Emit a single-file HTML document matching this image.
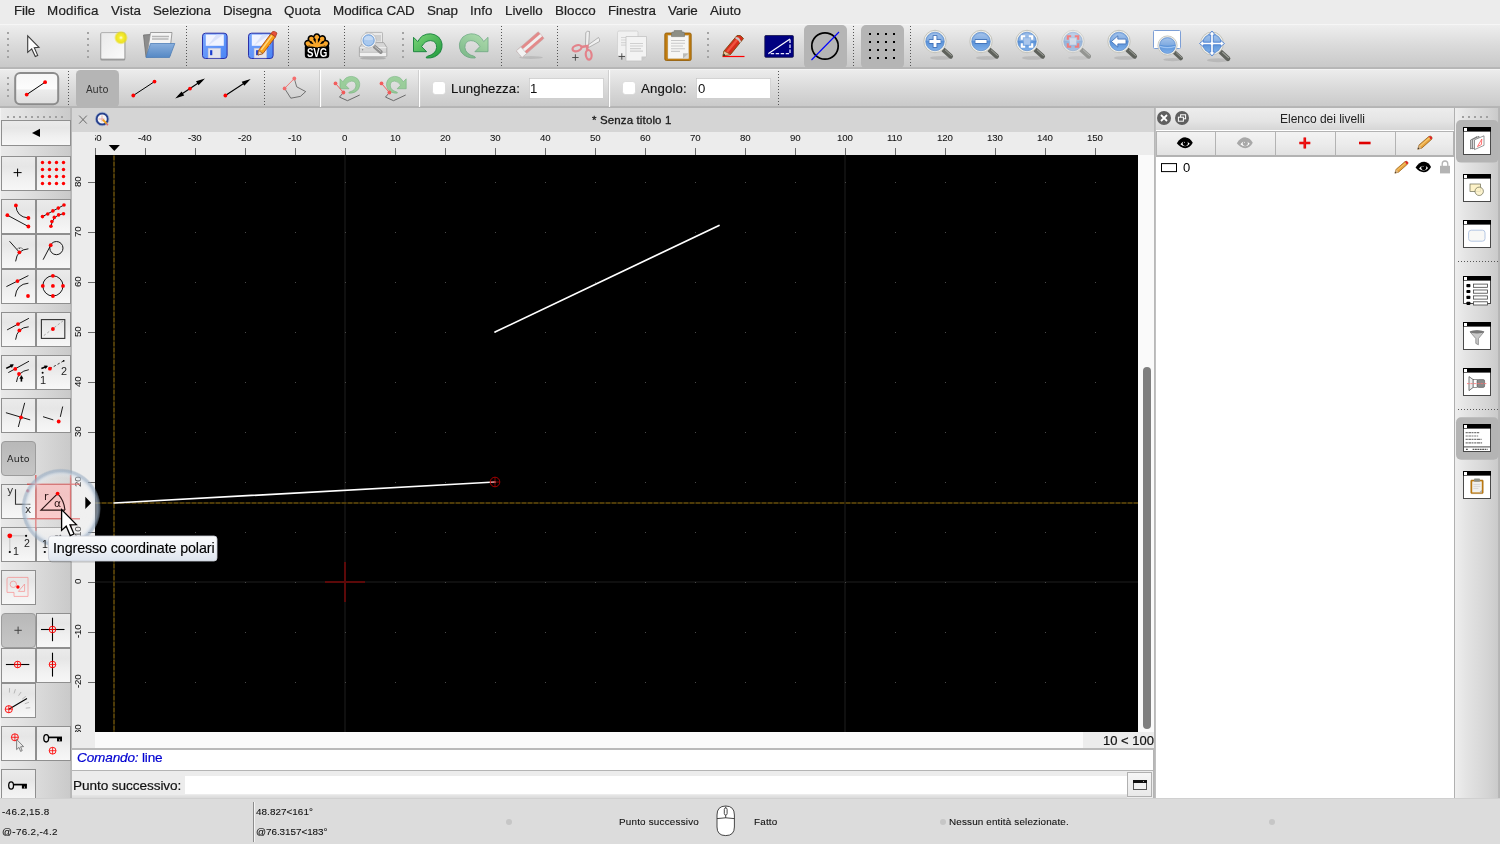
<!DOCTYPE html>
<html lang="it"><head><meta charset="utf-8"><title>Senza titolo 1 - QCAD</title>
<style>
*{box-sizing:border-box;margin:0;padding:0}
html,body{width:1500px;height:844px;overflow:hidden;background:#ececec}
body{font-family:"Liberation Sans",sans-serif;position:relative;-webkit-font-smoothing:antialiased}
.a{position:absolute}
.t{position:absolute;white-space:pre;line-height:1;font-family:"Liberation Sans",sans-serif;will-change:transform}
svg{position:absolute;overflow:visible}
.tb{background:linear-gradient(#f1f1f1,#e4e4e4 45%,#cdcdcd)}
.btn{position:absolute;border:1px solid #9a9a9a;background:linear-gradient(#fbfbfb,#ededed 50%,#dcdcdc)}
</style></head>
<body>
<div class="a" style="left:0px;top:0px;width:1500px;height:24px;background:#ececec"></div>
<span class="t " style="left:13.8px;top:3.6px;font-size:13.4px;color:#222;letter-spacing:-0.123px;-webkit-text-stroke:0.2px #222;">File</span>
<span class="t " style="left:47px;top:3.6px;font-size:13.4px;color:#222;letter-spacing:0.225px;-webkit-text-stroke:0.2px #222;">Modifica</span>
<span class="t " style="left:110.9px;top:3.6px;font-size:13.4px;color:#222;letter-spacing:0.110px;-webkit-text-stroke:0.2px #222;">Vista</span>
<span class="t " style="left:152.9px;top:3.6px;font-size:13.4px;color:#222;letter-spacing:-0.117px;-webkit-text-stroke:0.2px #222;">Seleziona</span>
<span class="t " style="left:222.9px;top:3.6px;font-size:13.4px;color:#222;letter-spacing:-0.081px;-webkit-text-stroke:0.2px #222;">Disegna</span>
<span class="t " style="left:283.9px;top:3.6px;font-size:13.4px;color:#222;letter-spacing:0.039px;-webkit-text-stroke:0.2px #222;">Quota</span>
<span class="t " style="left:332.8px;top:3.6px;font-size:13.4px;color:#222;letter-spacing:-0.009px;-webkit-text-stroke:0.2px #222;">Modifica CAD</span>
<span class="t " style="left:427px;top:3.6px;font-size:13.4px;color:#222;letter-spacing:-0.149px;-webkit-text-stroke:0.2px #222;">Snap</span>
<span class="t " style="left:470.1px;top:3.6px;font-size:13.4px;color:#222;letter-spacing:0.037px;-webkit-text-stroke:0.2px #222;">Info</span>
<span class="t " style="left:505.1px;top:3.6px;font-size:13.4px;color:#222;letter-spacing:-0.041px;-webkit-text-stroke:0.2px #222;">Livello</span>
<span class="t " style="left:555.2px;top:3.6px;font-size:13.4px;color:#222;letter-spacing:0.097px;-webkit-text-stroke:0.2px #222;">Blocco</span>
<span class="t " style="left:607.9px;top:3.6px;font-size:13.4px;color:#222;letter-spacing:-0.063px;-webkit-text-stroke:0.2px #222;">Finestra</span>
<span class="t " style="left:668px;top:3.6px;font-size:13.4px;color:#222;letter-spacing:-0.138px;-webkit-text-stroke:0.2px #222;">Varie</span>
<span class="t " style="left:709.8px;top:3.6px;font-size:13.4px;color:#222;letter-spacing:0.111px;-webkit-text-stroke:0.2px #222;">Aiuto</span>
<div class="a" style="left:0px;top:24px;width:1500px;height:45px;background:linear-gradient(#f6f6f6 0,#f6f6f6 1px,#eeeeee 1px,#dadada 22px,#c9c9c9 43px,#bababa 43px,#b4b4b4 44px,#b8b8b8 45px)"></div>
<div class="a" style="left:0px;top:69px;width:1500px;height:39px;background:linear-gradient(#f4f4f4 0,#f4f4f4 1px,#ececec 1px,#dadada 19px,#cacaca 37px,#bababa 37px,#b2b2b2 38px,#b6b6b6 39px)"></div>
<svg class="a" style="left:0;top:0" width="1500" height="110" viewBox="0 0 1500 110"><defs>
<linearGradient id="gblue" x1="0" y1="0" x2="0" y2="1"><stop offset="0" stop-color="#8db4e6"/><stop offset="0.5" stop-color="#5a92d8"/><stop offset="1" stop-color="#7fb0ea"/></linearGradient>
<linearGradient id="gfold" x1="0" y1="0" x2="0" y2="1"><stop offset="0" stop-color="#8ab0de"/><stop offset="1" stop-color="#5588c4"/></linearGradient>
<linearGradient id="gsave" x1="0" y1="0" x2="1" y2="1"><stop offset="0" stop-color="#7aa8ff"/><stop offset="1" stop-color="#4a84f4"/></linearGradient>
<linearGradient id="gpaper" x1="0" y1="0" x2="1" y2="1"><stop offset="0" stop-color="#e9e9e9"/><stop offset="1" stop-color="#fbfbfb"/></linearGradient>
<radialGradient id="gglow"><stop offset="0" stop-color="#ffffe8"/><stop offset="0.3" stop-color="#f6ee30"/><stop offset="0.7" stop-color="#ece010" stop-opacity="0.9"/><stop offset="1" stop-color="#e8dc10" stop-opacity="0"/></radialGradient>
<linearGradient id="ggreen" x1="0" y1="0" x2="1" y2="1"><stop offset="0" stop-color="#7ed67a"/><stop offset="1" stop-color="#1f9a3c"/></linearGradient>
<g id="mag"><ellipse cx="6" cy="16.4" rx="11" ry="1.9" fill="#000" opacity="0.10"/><path d="M8.6 8.4 L15.6 14.8" stroke="#5f625c" stroke-width="4.8" stroke-linecap="round"/><path d="M10.4 8.6 L16.4 14" stroke="#a3a69f" stroke-width="1" stroke-linecap="round"/><circle cx="0" cy="0" r="11.2" fill="#f1f1ec" stroke="#bdbdb5" stroke-width="0.9"/><circle cx="0" cy="0" r="9.3" fill="url(#gblue)" stroke="#4d7fc4" stroke-width="0.6"/><path d="M-8.8 -1 A9 9 0 0 1 8.8 -1 Q0 1.6 -8.8 -1 Z" fill="#fff" opacity="0.22"/></g>
</defs><rect x="7" y="32" width="2" height="2" fill="#a3a3a3"/><rect x="7" y="38" width="2" height="2" fill="#a3a3a3"/><rect x="7" y="44" width="2" height="2" fill="#a3a3a3"/><rect x="7" y="50" width="2" height="2" fill="#a3a3a3"/><rect x="7" y="56" width="2" height="2" fill="#a3a3a3"/><rect x="87" y="32" width="2" height="2" fill="#a3a3a3"/><rect x="87" y="38" width="2" height="2" fill="#a3a3a3"/><rect x="87" y="44" width="2" height="2" fill="#a3a3a3"/><rect x="87" y="50" width="2" height="2" fill="#a3a3a3"/><rect x="87" y="56" width="2" height="2" fill="#a3a3a3"/><rect x="402" y="32" width="2" height="2" fill="#a3a3a3"/><rect x="402" y="38" width="2" height="2" fill="#a3a3a3"/><rect x="402" y="44" width="2" height="2" fill="#a3a3a3"/><rect x="402" y="50" width="2" height="2" fill="#a3a3a3"/><rect x="402" y="56" width="2" height="2" fill="#a3a3a3"/><rect x="707" y="32" width="2" height="2" fill="#a3a3a3"/><rect x="707" y="38" width="2" height="2" fill="#a3a3a3"/><rect x="707" y="44" width="2" height="2" fill="#a3a3a3"/><rect x="707" y="50" width="2" height="2" fill="#a3a3a3"/><rect x="707" y="56" width="2" height="2" fill="#a3a3a3"/><line x1="186.5" y1="26" x2="186.5" y2="67" stroke="#555" stroke-width="1" stroke-dasharray="1 2"/><line x1="288.5" y1="26" x2="288.5" y2="67" stroke="#555" stroke-width="1" stroke-dasharray="1 2"/><line x1="344.5" y1="26" x2="344.5" y2="67" stroke="#555" stroke-width="1" stroke-dasharray="1 2"/><line x1="501.5" y1="26" x2="501.5" y2="67" stroke="#555" stroke-width="1" stroke-dasharray="1 2"/><line x1="557.5" y1="26" x2="557.5" y2="67" stroke="#555" stroke-width="1" stroke-dasharray="1 2"/><line x1="853.5" y1="26" x2="853.5" y2="67" stroke="#555" stroke-width="1" stroke-dasharray="1 2"/><line x1="910.5" y1="26" x2="910.5" y2="67" stroke="#555" stroke-width="1" stroke-dasharray="1 2"/><path d="M27.7 35.8 L27.7 52.4 L31.7 48.9 L35.3 56.6 L37.7 55.4 L34.3 47.8 L39 47.3 Z" fill="#fdfdfd" stroke="#3c3c3c" stroke-width="1.1" stroke-linejoin="miter"/><rect x="100.3" y="33" width="25" height="27.6" rx="1.5" fill="#7f7f7f" opacity="0.7"/><rect x="100.8" y="32.6" width="24" height="26.4" rx="1.2" fill="url(#gpaper)" stroke="#a0a0a0" stroke-width="0.8"/><circle cx="121" cy="37.7" r="7" fill="url(#gglow)"/><path d="M143.5 35 L150 34.5 L151 36 L170 36 L170 56 L146 57 Z" fill="#8c8c8c" stroke="#6e6e6e" stroke-width="0.8"/><path d="M150.5 32.5 L172 32.5 L170 50 L147 55 Z" fill="#f4f4f4" stroke="#8a8a8a" stroke-width="0.8"/><path d="M152 36.5 h17 M152 39 h16.5" stroke="#b5b5b5" stroke-width="1.6"/><path d="M150.5 43.5 L174.8 43.5 L169.5 57.5 L146 57.5 Z" fill="url(#gfold)" stroke="#4f7fb8" stroke-width="0.8" stroke-linejoin="round"/><rect x="202.5" y="33.2" width="24.6" height="25.3" rx="3" fill="url(#gsave)" stroke="#2a30a8" stroke-width="1"/><rect x="205.8" y="34.6" width="18" height="11.2" fill="#f0f3ff"/><path d="M207.5 46 L216.5 34.6 L223.5 34.6 Z" fill="#d5ddfa" opacity="0.8"/><rect x="208.1" y="48.2" width="12.5" height="9.8" fill="#e4e4ec" stroke="#b9bdd8" stroke-width="0.5"/><rect x="210.1" y="50.2" width="2.2" height="5" fill="#1c3fd0"/><rect x="248.5" y="33.2" width="24.6" height="25.3" rx="3" fill="url(#gsave)" stroke="#2a30a8" stroke-width="1"/><rect x="251.8" y="34.6" width="18" height="11.2" fill="#f0f3ff"/><path d="M253.5 46 L262.5 34.6 L269.5 34.6 Z" fill="#d5ddfa" opacity="0.8"/><rect x="254.1" y="48.2" width="12.5" height="9.8" fill="#e4e4ec" stroke="#b9bdd8" stroke-width="0.5"/><rect x="256.1" y="50.2" width="2.2" height="5" fill="#1c3fd0"/><path d="M258.5 50.5 L271 33.5 L275.5 36.8 L263 53.5 L258 55 Z" fill="#f7a21a" stroke="#b04a10" stroke-width="0.9" stroke-linejoin="round"/><path d="M271 33.5 L272.6 31.6 Q274.8 30.8 277 33 L275.5 36.8 Z" fill="#e8503a" stroke="#a83a20" stroke-width="0.8"/><path d="M261.2 50 L272 35.6" stroke="#ffd98a" stroke-width="1.3"/><path d="M258.5 50.5 L263 53.5 L258 55 Z" fill="#f1d6a8" stroke="#8a4a20" stroke-width="0.6"/><g fill="#000" stroke="#000" stroke-width="3" stroke-linejoin="round"><g transform="translate(316.8 46.5) rotate(-72)"><path d="M-1.2 0 L-1.2 -7.4 A2.3 2.3 0 1 1 1.2 -7.4 L1.2 0 Z"/></g><g transform="translate(316.8 46.5) rotate(-36)"><path d="M-1.2 0 L-1.2 -7.4 A2.3 2.3 0 1 1 1.2 -7.4 L1.2 0 Z"/></g><g transform="translate(316.8 46.5) rotate(0)"><path d="M-1.2 0 L-1.2 -7.4 A2.3 2.3 0 1 1 1.2 -7.4 L1.2 0 Z"/></g><g transform="translate(316.8 46.5) rotate(36)"><path d="M-1.2 0 L-1.2 -7.4 A2.3 2.3 0 1 1 1.2 -7.4 L1.2 0 Z"/></g><g transform="translate(316.8 46.5) rotate(72)"><path d="M-1.2 0 L-1.2 -7.4 A2.3 2.3 0 1 1 1.2 -7.4 L1.2 0 Z"/></g></g><rect x="304.8" y="44" width="24.4" height="14.2" rx="3.2" fill="#000"/><g fill="#f9a72b"><g transform="translate(316.8 46.5) rotate(-72)"><path d="M-1.1 0 L-1.1 -7.4 A2.2 2.2 0 1 1 1.1 -7.4 L1.1 0 Z"/></g><g transform="translate(316.8 46.5) rotate(-36)"><path d="M-1.1 0 L-1.1 -7.4 A2.2 2.2 0 1 1 1.1 -7.4 L1.1 0 Z"/></g><g transform="translate(316.8 46.5) rotate(0)"><path d="M-1.1 0 L-1.1 -7.4 A2.2 2.2 0 1 1 1.1 -7.4 L1.1 0 Z"/></g><g transform="translate(316.8 46.5) rotate(36)"><path d="M-1.1 0 L-1.1 -7.4 A2.2 2.2 0 1 1 1.1 -7.4 L1.1 0 Z"/></g><g transform="translate(316.8 46.5) rotate(72)"><path d="M-1.1 0 L-1.1 -7.4 A2.2 2.2 0 1 1 1.1 -7.4 L1.1 0 Z"/></g><path d="M307 46.4 Q316.8 41 326.6 46.4 Z"/></g><text x="317.1" y="56.6" font-family="Liberation Sans, sans-serif" font-weight="bold" font-size="12" fill="#fff" text-anchor="middle" textLength="20.4" lengthAdjust="spacingAndGlyphs">SVG</text><ellipse cx="373" cy="58.2" rx="13" ry="1.6" fill="#000" opacity="0.16"/><rect x="365.5" y="32.4" width="17" height="12.5" rx="0.8" fill="#e9e9e9" stroke="#ababab" stroke-width="0.8"/><rect x="373.5" y="35" width="7.5" height="6.5" fill="#cfcfcf"/><path d="M359.4 47.4 L362.8 42.6 L383.8 42.6 L386.8 47.4 L386.8 56.4 L359.4 56.4 Z" fill="#d6d6d6" stroke="#9c9c9c" stroke-width="0.8" stroke-linejoin="round"/><path d="M360 47.6 H386.4" stroke="#f4f4f4" stroke-width="0.8"/><circle cx="362.6" cy="49.8" r="0.7" fill="#8a8a8a"/><rect x="359.6" y="52.2" width="27" height="4.4" fill="#f0f0f0" stroke="#aaaaaa" stroke-width="0.6"/><path d="M374.4 46.6 L380.8 52" stroke="#8e8e8e" stroke-width="3.8" stroke-linecap="round"/><path d="M375 46.6 L380.6 51.2" stroke="#c8c8c8" stroke-width="1" stroke-linecap="round"/><circle cx="368.6" cy="40.4" r="7.6" fill="#f2f2f2" stroke="#b4b4b4" stroke-width="0.7"/><circle cx="368.6" cy="40.4" r="5.6" fill="#a9c9ef" stroke="#5f93d4" stroke-width="0.9"/><path d="M363.6 39.4 A5.2 5.2 0 0 1 373.6 39.4 Q368.6 41 363.6 39.4 Z" fill="#fff" opacity="0.3"/><path d="M413.5 37.3 L413.5 51.7 L426.6 51.7 L421.6 46.6 Q425 40.6 430.6 40.6 Q436.8 41 436.6 47.6 Q436 54 427.4 56.3 Q425.6 57 426.4 58 Q435.6 58.6 440.4 52 Q444.6 43.6 438.6 37 Q431 31.2 422.6 35.8 Q419.6 38 417.8 41.6 Z" fill="url(#ggreen)" stroke="#15803a" stroke-width="0.9" stroke-linejoin="round"/><g opacity="0.5"><path transform="translate(901.5 0) scale(-1 1)" d="M413.5 37.3 L413.5 51.7 L426.6 51.7 L421.6 46.6 Q425 40.6 430.6 40.6 Q436.8 41 436.6 47.6 Q436 54 427.4 56.3 Q425.6 57 426.4 58 Q435.6 58.6 440.4 52 Q444.6 43.6 438.6 37 Q431 31.2 422.6 35.8 Q419.6 38 417.8 41.6 Z" fill="url(#ggreen)" stroke="#15803a" stroke-width="0.9" stroke-linejoin="round"/></g><ellipse cx="531" cy="57.5" rx="12" ry="1.5" fill="#000" opacity="0.10"/><g transform="translate(530.2 44.6) rotate(-41)"><rect x="-14.6" y="-4.4" width="29.2" height="8.8" rx="1" fill="#e38a8a" stroke="#c9a0a0" stroke-width="0.6"/><rect x="-14.6" y="-1.5" width="29.2" height="3" fill="#efefef"/><rect x="-14.6" y="-4.4" width="6" height="8.8" fill="#f3f3f3" stroke="#bdbdbd" stroke-width="0.6"/></g><path d="M585.5 46 L585.8 32.5 Q587.5 30.5 589.5 31.5 L588.5 47 Z" fill="#f0f0f0" stroke="#9a9a9a" stroke-width="0.7"/><path d="M587.5 45.5 L598.5 37.5 Q600 39 599.5 41.5 L588.5 47.5 Z" fill="#f0f0f0" stroke="#9a9a9a" stroke-width="0.7"/><ellipse cx="577" cy="48.2" rx="4.6" ry="2.9" transform="rotate(-18 577 48.2)" fill="none" stroke="#e3828a" stroke-width="2.2"/><ellipse cx="588.7" cy="54.8" rx="2.9" ry="4.8" transform="rotate(-8 588.7 54.8)" fill="none" stroke="#e3828a" stroke-width="2.2"/><path d="M581 47 L587.5 46 L587 50" fill="none" stroke="#e3828a" stroke-width="2.4"/><path d="M572.2 57.5 h6.4 M575.4 54.3 v6.4" stroke="#444" stroke-width="0.9"/><rect x="617.5" y="31" width="20.5" height="25" rx="1.5" fill="#f1f1f1" stroke="#cfcfcf" stroke-width="0.8"/><path d="M621 37.5 h12 M621 40 h12 M621 42.6 h12 M621 45.2 h12" stroke="#d6d6d6" stroke-width="1.2"/><path d="M626 36.5 L646.5 36.5 L646.5 56.5 L641.5 61 L626 61 Z" fill="#f3f3f3" stroke="#c3c3c3" stroke-width="0.8"/><path d="M646.5 56.5 L641.5 56.5 L641.5 61 Z" fill="#c9c9c9"/><path d="M630 43.5 h13 M630 46 h13 M630 48.6 h11 M630 51.2 h13" stroke="#d0d0d0" stroke-width="1.2"/><path d="M618.6 56.5 h6.4 M621.8 53.3 v6.4" stroke="#444" stroke-width="0.9"/><rect x="664.8" y="33" width="26.4" height="27.5" rx="1.5" fill="#c17d11" stroke="#8f5902" stroke-width="0.8"/><rect x="668" y="35.5" width="20.5" height="23" fill="#f6f6f4" stroke="#d8d8d0" stroke-width="0.5"/><path d="M688.5 53.5 L683 53.5 L683 58.5 Z" fill="#a9a9a2"/><path d="M683 53.5 L688.5 53.5 L688.5 58.5 L683 58.5 Z" fill="#c9c9c4" opacity="0.6"/><path d="M671 40.5 h14 M671 43.3 h14 M671 46 h12 M671 48.7 h14 M671 51.4 h9" stroke="#c9c9c9" stroke-width="1.1"/><path d="M671.5 33.6 Q671.5 32 673 32 L674.2 32 L674.2 30.6 L681.8 30.6 L681.8 32 L683 32 Q684.5 32 684.5 33.6 L684.5 36.6 L671.5 36.6 Z" fill="#8d8f85" stroke="#6e7068" stroke-width="0.6"/><path d="M722.5 56.5 h22" stroke="#ff0000" stroke-width="1.2"/><path d="M724 51 L737 35.5 Q740.5 34 743.5 38.5 L730.5 54.5 L723 55.8 Z" fill="#d62d1c" stroke="#7a4a10" stroke-width="0.9" stroke-linejoin="round"/><path d="M727 52 L739 37.5" stroke="#f0543f" stroke-width="2.2"/><path d="M735.5 38 Q739 38 740.5 42.5" stroke="#c9c9c9" stroke-width="1.8" fill="none"/><path d="M724 51 L730.5 54.5 L723 55.8 Z" fill="#e8c9a0" stroke="#7a4a10" stroke-width="0.5"/><path d="M723 55.8 L725.3 55.4 L724 53.4 Z" fill="#111"/><rect x="764.8" y="35.5" width="28.6" height="21.8" rx="1" fill="#000080" stroke="#14144a" stroke-width="0.8"/><path d="M768.5 53.6 L790 39" stroke="#fff" stroke-width="1.2"/><path d="M790 39.5 L790 53.6 L768.5 53.6" fill="none" stroke="#e9e9ff" stroke-width="1.3" stroke-dasharray="3.4 1.6"/><rect x="804" y="25" width="43" height="43.5" rx="5" fill="#b5b5b5"/><circle cx="825" cy="46" r="13.2" fill="none" stroke="#000" stroke-width="1.7"/><path d="M811.5 60 L839 32" stroke="#0000ff" stroke-width="1.1"/><rect x="861" y="25" width="43" height="43.5" rx="5" fill="#b5b5b5"/><rect x="869" y="33" width="2" height="2" fill="#000"/><rect x="869" y="41" width="2" height="2" fill="#000"/><rect x="869" y="49" width="2" height="2" fill="#000"/><rect x="869" y="57" width="2" height="2" fill="#000"/><rect x="877" y="33" width="2" height="2" fill="#000"/><rect x="877" y="41" width="2" height="2" fill="#000"/><rect x="877" y="49" width="2" height="2" fill="#000"/><rect x="877" y="57" width="2" height="2" fill="#000"/><rect x="885" y="33" width="2" height="2" fill="#000"/><rect x="885" y="41" width="2" height="2" fill="#000"/><rect x="885" y="49" width="2" height="2" fill="#000"/><rect x="885" y="57" width="2" height="2" fill="#000"/><rect x="893" y="33" width="2" height="2" fill="#000"/><rect x="893" y="41" width="2" height="2" fill="#000"/><rect x="893" y="49" width="2" height="2" fill="#000"/><rect x="893" y="57" width="2" height="2" fill="#000"/><g transform="translate(935 41.5)" opacity="1"><use href="#mag"/><path d="M-6.2 0 h12.4 M0 -6.2 v12.4" stroke="#3b6cb4" stroke-width="4.6"/><path d="M-5.6 0 h11.2 M0 -5.6 v11.2" stroke="#fff" stroke-width="3"/></g><g transform="translate(981 41.5)" opacity="1"><use href="#mag"/><path d="M-6.2 0 h12.4" stroke="#3b6cb4" stroke-width="4.6"/><path d="M-5.6 0 h11.2" stroke="#fff" stroke-width="3"/></g><g transform="translate(1027 41.5)" opacity="1"><use href="#mag"/><rect x="-3.3" y="-3.3" width="6.6" height="6.6" fill="#a9c6ec"/><path d="M-5.2 -1.8 v-3.4 h3.4 M1.8 -5.2 h3.4 v3.4 M5.2 1.8 v3.4 h-3.4 M-1.8 5.2 h-3.4 v-3.4" fill="none" stroke="#fff" stroke-width="2.1"/></g><g transform="translate(1073 41.5)" opacity="0.55"><use href="#mag"/><rect x="-3.3" y="-3.3" width="6.6" height="6.6" fill="#c9d9f0"/><path d="M-5.2 -1.8 v-3.4 h3.4 M1.8 -5.2 h3.4 v3.4 M5.2 1.8 v3.4 h-3.4 M-1.8 5.2 h-3.4 v-3.4" fill="none" stroke="#ff3030" stroke-width="2.1"/></g><g transform="translate(1119 41.5)" opacity="1"><use href="#mag"/><path d="M-7.6 0 L-1.2 -5.6 L-1.2 -2.4 L7 -2.4 L7 2.4 L-1.2 2.4 L-1.2 5.6 Z" fill="#fff" stroke="#3b6cb4" stroke-width="0.8"/></g><rect x="1153.5" y="30.5" width="27" height="18" rx="1" fill="#fff" stroke="#7d9fd6" stroke-width="1"/><g transform="translate(1167.5 45.5) scale(0.86)"><use href="#mag"/><path d="M-9 1 Q0 4 9 1" stroke="#9cc3f2" stroke-width="1.6" fill="none"/></g><g transform="translate(1212 43.5)"><g transform="scale(1.02)"><use href="#mag"/></g><path d="M0 -12.5 L3.2 -8.6 L1.3 -8.6 L1.3 -1.3 L8.6 -1.3 L8.6 -3.2 L12.5 0 L8.6 3.2 L8.6 1.3 L1.3 1.3 L1.3 8.6 L3.2 8.6 L0 12.5 L-3.2 8.6 L-1.3 8.6 L-1.3 1.3 L-8.6 1.3 L-8.6 3.2 L-12.5 0 L-8.6 -3.2 L-8.6 -1.3 L-1.3 -1.3 L-1.3 -8.6 L-3.2 -8.6 Z" fill="#fff" stroke="#4a7fd0" stroke-width="0.9"/></g><rect x="7" y="77" width="2" height="2" fill="#a3a3a3"/><rect x="7" y="83" width="2" height="2" fill="#a3a3a3"/><rect x="7" y="89" width="2" height="2" fill="#a3a3a3"/><rect x="7" y="95" width="2" height="2" fill="#a3a3a3"/><line x1="68.5" y1="71" x2="68.5" y2="106" stroke="#555" stroke-width="1" stroke-dasharray="1 2"/><line x1="264.5" y1="71" x2="264.5" y2="106" stroke="#555" stroke-width="1" stroke-dasharray="1 2"/><line x1="778.5" y1="71" x2="778.5" y2="106" stroke="#555" stroke-width="1" stroke-dasharray="1 2"/><line x1="320.5" y1="70" x2="320.5" y2="107" stroke="#fff" stroke-width="1.2"/><line x1="319.5" y1="70" x2="319.5" y2="107" stroke="#bdbdbd" stroke-width="0.6"/><line x1="419.5" y1="70" x2="419.5" y2="107" stroke="#fff" stroke-width="1.2"/><line x1="418.5" y1="70" x2="418.5" y2="107" stroke="#bdbdbd" stroke-width="0.6"/><line x1="609.5" y1="70" x2="609.5" y2="107" stroke="#fff" stroke-width="1.2"/><line x1="608.5" y1="70" x2="608.5" y2="107" stroke="#bdbdbd" stroke-width="0.6"/><defs><linearGradient id="gbtn" x1="0" y1="0" x2="0" y2="1"><stop offset="0" stop-color="#f6f6f6"/><stop offset="0.5" stop-color="#fcfcfc"/><stop offset="0.55" stop-color="#ececec"/><stop offset="1" stop-color="#dedede"/></linearGradient></defs><rect x="15.2" y="73" width="43" height="31.2" rx="5" fill="url(#gbtn)" stroke="#8c8c8c" stroke-width="2"/><g opacity="1"><line x1="26.7" y1="94.6" x2="45.1" y2="82.2" stroke="#000" stroke-width="1"/><circle cx="26.7" cy="94.6" r="1.9" fill="#ff0000"/><circle cx="45.1" cy="82.2" r="1.9" fill="#ff0000"/></g><rect x="76" y="70" width="43" height="37.5" rx="4.5" fill="#b5b5b5"/><g opacity="1"><line x1="133.3" y1="95.5" x2="154.5" y2="81.6" stroke="#000" stroke-width="1"/><circle cx="133.3" cy="95.5" r="1.9" fill="#ff0000"/><circle cx="154.5" cy="81.6" r="1.9" fill="#ff0000"/></g><line x1="178" y1="96.5" x2="202" y2="80.5" stroke="#000" stroke-width="1.1"/><path d="M175.2 98.4 L181.6 91.6 L184.2 95.6 Z M205 78.4 L198.6 85.2 L196 81.2 Z" fill="#000"/><circle cx="190" cy="88.6" r="1.9" fill="#ff0000"/><line x1="225.4" y1="95.5" x2="247.5" y2="81" stroke="#000" stroke-width="1.1"/><path d="M250.7 78.9 L244.3 85.7 L241.7 81.7 Z" fill="#000"/><circle cx="225.4" cy="95.5" r="1.9" fill="#ff0000"/><g opacity="0.6"><path d="M294.3 78.5 L296.7 86.8 L305.7 91.6 L300.4 96.4 L290.8 98.2 L284.6 88.4" fill="none" stroke="#000" stroke-width="0.8"/><path d="M294.3 78.5 L284.6 88.4" stroke="#ff2020" stroke-width="0.9"/><circle cx="294.3" cy="78.5" r="1.9" fill="#ff2020"/><circle cx="284.6" cy="88.4" r="1.9" fill="#ff2020"/></g><g opacity="0.62"><path transform="translate(54.685 53.085) scale(0.69)" d="M413.5 37.3 L413.5 51.7 L426.6 51.7 L421.6 46.6 Q425 40.6 430.6 40.6 Q436.8 41 436.6 47.6 Q436 54 427.4 56.3 Q425.6 57 426.4 58 Q435.6 58.6 440.4 52 Q444.6 43.6 438.6 37 Q431 31.2 422.6 35.8 Q419.6 38 417.8 41.6 Z" fill="#72c472" stroke="#3c9a4c" stroke-width="0.9"/><path d="M343.4 92.5 L339.5 97.1 L347.5 100.7 L359.7 95" fill="none" stroke="#000" stroke-width="0.8"/><path d="M335.5 83.4 L343.4 92.5" stroke="#ff1010" stroke-width="1"/><circle cx="335.5" cy="83.4" r="1.9" fill="#ff1010"/><circle cx="343.4" cy="92.5" r="1.9" fill="#ff1010"/></g><g opacity="0.62"><path transform="translate(691.515 53.085) scale(-0.69 0.69)" d="M413.5 37.3 L413.5 51.7 L426.6 51.7 L421.6 46.6 Q425 40.6 430.6 40.6 Q436.8 41 436.6 47.6 Q436 54 427.4 56.3 Q425.6 57 426.4 58 Q435.6 58.6 440.4 52 Q444.6 43.6 438.6 37 Q431 31.2 422.6 35.8 Q419.6 38 417.8 41.6 Z" fill="#72c472" stroke="#3c9a4c" stroke-width="0.9"/><path d="M389.4 92.5 L385.5 97.1 L393.5 100.7 L405.7 95" fill="none" stroke="#000" stroke-width="0.8"/><path d="M381.5 83.4 L389.4 92.5" stroke="#ff1010" stroke-width="1"/><circle cx="381.5" cy="83.4" r="1.9" fill="#ff1010"/><circle cx="389.4" cy="92.5" r="1.9" fill="#ff1010"/></g><rect x="432.5" y="81.5" width="13" height="13" rx="3" fill="#fff" stroke="#d0d0d0" stroke-width="0.6"/><rect x="622.5" y="81.5" width="13" height="13" rx="3" fill="#fff" stroke="#d0d0d0" stroke-width="0.6"/><rect x="529.5" y="78.6" width="74" height="19.8" fill="#fff" stroke="#c2c2c2" stroke-width="0.6"/><rect x="696.5" y="78.6" width="74" height="19.8" fill="#fff" stroke="#c2c2c2" stroke-width="0.6"/></svg>
<span class="t " style="left:86.2px;top:84.6px;font-size:10.9px;color:#333;font-family:'DejaVu Sans Condensed','DejaVu Sans',sans-serif;font-stretch:condensed;letter-spacing:-0.1px;">Auto</span>
<span class="t " style="left:451px;top:82.3px;font-size:13.2px;color:#111;letter-spacing:0.074px;-webkit-text-stroke:0.15px #111;">Lunghezza:</span>
<span class="t " style="left:530.2px;top:82.3px;font-size:13.2px;color:#111;">1</span>
<span class="t " style="left:640.6px;top:82.3px;font-size:13.2px;color:#111;letter-spacing:0.176px;-webkit-text-stroke:0.15px #111;">Angolo:</span>
<span class="t " style="left:697.8px;top:82.3px;font-size:13.2px;color:#111;">0</span>
<div class="a" style="left:72px;top:108px;width:1083px;height:24px;background:#d5d5d5"></div>
<div class="a" style="left:72px;top:132px;width:1083px;height:23px;background:#ececec"></div>
<div class="a" style="left:72px;top:155px;width:23px;height:577px;background:#ececec"></div>
<div class="a" style="left:72px;top:732px;width:1083px;height:16.5px;background:#fafafa"></div>
<div class="a" style="left:72px;top:732px;width:23px;height:16.5px;background:#ececec"></div>
<div class="a" style="left:1083px;top:732px;width:71px;height:16.5px;background:#ececec"></div>
<div class="a" style="left:1138px;top:155px;width:16px;height:577px;background:#fafafa"></div>
<div class="a" style="left:1143px;top:366.5px;width:8px;height:362.5px;background:#7f7f7f;border-radius:4px"></div>
<svg class="a" style="left:95px;top:155px;background:#000" width="1043" height="577" viewBox="95 155 1043 577"><rect x="344" y="155" width="2" height="577" fill="#0f0f0f"/><rect x="844" y="155" width="2" height="577" fill="#0f0f0f"/><rect x="95" y="581" width="1043" height="2" fill="#0f0f0f"/><rect x="145" y="182" width="1" height="1" fill="#484848"/><rect x="145" y="232" width="1" height="1" fill="#484848"/><rect x="145" y="282" width="1" height="1" fill="#484848"/><rect x="145" y="332" width="1" height="1" fill="#484848"/><rect x="145" y="382" width="1" height="1" fill="#484848"/><rect x="145" y="432" width="1" height="1" fill="#484848"/><rect x="145" y="482" width="1" height="1" fill="#484848"/><rect x="145" y="532" width="1" height="1" fill="#484848"/><rect x="145" y="582" width="1" height="1" fill="#484848"/><rect x="145" y="632" width="1" height="1" fill="#484848"/><rect x="145" y="682" width="1" height="1" fill="#484848"/><rect x="195" y="182" width="1" height="1" fill="#484848"/><rect x="195" y="232" width="1" height="1" fill="#484848"/><rect x="195" y="282" width="1" height="1" fill="#484848"/><rect x="195" y="332" width="1" height="1" fill="#484848"/><rect x="195" y="382" width="1" height="1" fill="#484848"/><rect x="195" y="432" width="1" height="1" fill="#484848"/><rect x="195" y="482" width="1" height="1" fill="#484848"/><rect x="195" y="532" width="1" height="1" fill="#484848"/><rect x="195" y="582" width="1" height="1" fill="#484848"/><rect x="195" y="632" width="1" height="1" fill="#484848"/><rect x="195" y="682" width="1" height="1" fill="#484848"/><rect x="245" y="182" width="1" height="1" fill="#484848"/><rect x="245" y="232" width="1" height="1" fill="#484848"/><rect x="245" y="282" width="1" height="1" fill="#484848"/><rect x="245" y="332" width="1" height="1" fill="#484848"/><rect x="245" y="382" width="1" height="1" fill="#484848"/><rect x="245" y="432" width="1" height="1" fill="#484848"/><rect x="245" y="482" width="1" height="1" fill="#484848"/><rect x="245" y="532" width="1" height="1" fill="#484848"/><rect x="245" y="582" width="1" height="1" fill="#484848"/><rect x="245" y="632" width="1" height="1" fill="#484848"/><rect x="245" y="682" width="1" height="1" fill="#484848"/><rect x="295" y="182" width="1" height="1" fill="#484848"/><rect x="295" y="232" width="1" height="1" fill="#484848"/><rect x="295" y="282" width="1" height="1" fill="#484848"/><rect x="295" y="332" width="1" height="1" fill="#484848"/><rect x="295" y="382" width="1" height="1" fill="#484848"/><rect x="295" y="432" width="1" height="1" fill="#484848"/><rect x="295" y="482" width="1" height="1" fill="#484848"/><rect x="295" y="532" width="1" height="1" fill="#484848"/><rect x="295" y="582" width="1" height="1" fill="#484848"/><rect x="295" y="632" width="1" height="1" fill="#484848"/><rect x="295" y="682" width="1" height="1" fill="#484848"/><rect x="345" y="182" width="1" height="1" fill="#484848"/><rect x="345" y="232" width="1" height="1" fill="#484848"/><rect x="345" y="282" width="1" height="1" fill="#484848"/><rect x="345" y="332" width="1" height="1" fill="#484848"/><rect x="345" y="382" width="1" height="1" fill="#484848"/><rect x="345" y="432" width="1" height="1" fill="#484848"/><rect x="345" y="482" width="1" height="1" fill="#484848"/><rect x="345" y="532" width="1" height="1" fill="#484848"/><rect x="345" y="582" width="1" height="1" fill="#484848"/><rect x="345" y="632" width="1" height="1" fill="#484848"/><rect x="345" y="682" width="1" height="1" fill="#484848"/><rect x="395" y="182" width="1" height="1" fill="#484848"/><rect x="395" y="232" width="1" height="1" fill="#484848"/><rect x="395" y="282" width="1" height="1" fill="#484848"/><rect x="395" y="332" width="1" height="1" fill="#484848"/><rect x="395" y="382" width="1" height="1" fill="#484848"/><rect x="395" y="432" width="1" height="1" fill="#484848"/><rect x="395" y="482" width="1" height="1" fill="#484848"/><rect x="395" y="532" width="1" height="1" fill="#484848"/><rect x="395" y="582" width="1" height="1" fill="#484848"/><rect x="395" y="632" width="1" height="1" fill="#484848"/><rect x="395" y="682" width="1" height="1" fill="#484848"/><rect x="445" y="182" width="1" height="1" fill="#484848"/><rect x="445" y="232" width="1" height="1" fill="#484848"/><rect x="445" y="282" width="1" height="1" fill="#484848"/><rect x="445" y="332" width="1" height="1" fill="#484848"/><rect x="445" y="382" width="1" height="1" fill="#484848"/><rect x="445" y="432" width="1" height="1" fill="#484848"/><rect x="445" y="482" width="1" height="1" fill="#484848"/><rect x="445" y="532" width="1" height="1" fill="#484848"/><rect x="445" y="582" width="1" height="1" fill="#484848"/><rect x="445" y="632" width="1" height="1" fill="#484848"/><rect x="445" y="682" width="1" height="1" fill="#484848"/><rect x="495" y="182" width="1" height="1" fill="#484848"/><rect x="495" y="232" width="1" height="1" fill="#484848"/><rect x="495" y="282" width="1" height="1" fill="#484848"/><rect x="495" y="332" width="1" height="1" fill="#484848"/><rect x="495" y="382" width="1" height="1" fill="#484848"/><rect x="495" y="432" width="1" height="1" fill="#484848"/><rect x="495" y="482" width="1" height="1" fill="#484848"/><rect x="495" y="532" width="1" height="1" fill="#484848"/><rect x="495" y="582" width="1" height="1" fill="#484848"/><rect x="495" y="632" width="1" height="1" fill="#484848"/><rect x="495" y="682" width="1" height="1" fill="#484848"/><rect x="545" y="182" width="1" height="1" fill="#484848"/><rect x="545" y="232" width="1" height="1" fill="#484848"/><rect x="545" y="282" width="1" height="1" fill="#484848"/><rect x="545" y="332" width="1" height="1" fill="#484848"/><rect x="545" y="382" width="1" height="1" fill="#484848"/><rect x="545" y="432" width="1" height="1" fill="#484848"/><rect x="545" y="482" width="1" height="1" fill="#484848"/><rect x="545" y="532" width="1" height="1" fill="#484848"/><rect x="545" y="582" width="1" height="1" fill="#484848"/><rect x="545" y="632" width="1" height="1" fill="#484848"/><rect x="545" y="682" width="1" height="1" fill="#484848"/><rect x="595" y="182" width="1" height="1" fill="#484848"/><rect x="595" y="232" width="1" height="1" fill="#484848"/><rect x="595" y="282" width="1" height="1" fill="#484848"/><rect x="595" y="332" width="1" height="1" fill="#484848"/><rect x="595" y="382" width="1" height="1" fill="#484848"/><rect x="595" y="432" width="1" height="1" fill="#484848"/><rect x="595" y="482" width="1" height="1" fill="#484848"/><rect x="595" y="532" width="1" height="1" fill="#484848"/><rect x="595" y="582" width="1" height="1" fill="#484848"/><rect x="595" y="632" width="1" height="1" fill="#484848"/><rect x="595" y="682" width="1" height="1" fill="#484848"/><rect x="645" y="182" width="1" height="1" fill="#484848"/><rect x="645" y="232" width="1" height="1" fill="#484848"/><rect x="645" y="282" width="1" height="1" fill="#484848"/><rect x="645" y="332" width="1" height="1" fill="#484848"/><rect x="645" y="382" width="1" height="1" fill="#484848"/><rect x="645" y="432" width="1" height="1" fill="#484848"/><rect x="645" y="482" width="1" height="1" fill="#484848"/><rect x="645" y="532" width="1" height="1" fill="#484848"/><rect x="645" y="582" width="1" height="1" fill="#484848"/><rect x="645" y="632" width="1" height="1" fill="#484848"/><rect x="645" y="682" width="1" height="1" fill="#484848"/><rect x="695" y="182" width="1" height="1" fill="#484848"/><rect x="695" y="232" width="1" height="1" fill="#484848"/><rect x="695" y="282" width="1" height="1" fill="#484848"/><rect x="695" y="332" width="1" height="1" fill="#484848"/><rect x="695" y="382" width="1" height="1" fill="#484848"/><rect x="695" y="432" width="1" height="1" fill="#484848"/><rect x="695" y="482" width="1" height="1" fill="#484848"/><rect x="695" y="532" width="1" height="1" fill="#484848"/><rect x="695" y="582" width="1" height="1" fill="#484848"/><rect x="695" y="632" width="1" height="1" fill="#484848"/><rect x="695" y="682" width="1" height="1" fill="#484848"/><rect x="745" y="182" width="1" height="1" fill="#484848"/><rect x="745" y="232" width="1" height="1" fill="#484848"/><rect x="745" y="282" width="1" height="1" fill="#484848"/><rect x="745" y="332" width="1" height="1" fill="#484848"/><rect x="745" y="382" width="1" height="1" fill="#484848"/><rect x="745" y="432" width="1" height="1" fill="#484848"/><rect x="745" y="482" width="1" height="1" fill="#484848"/><rect x="745" y="532" width="1" height="1" fill="#484848"/><rect x="745" y="582" width="1" height="1" fill="#484848"/><rect x="745" y="632" width="1" height="1" fill="#484848"/><rect x="745" y="682" width="1" height="1" fill="#484848"/><rect x="795" y="182" width="1" height="1" fill="#484848"/><rect x="795" y="232" width="1" height="1" fill="#484848"/><rect x="795" y="282" width="1" height="1" fill="#484848"/><rect x="795" y="332" width="1" height="1" fill="#484848"/><rect x="795" y="382" width="1" height="1" fill="#484848"/><rect x="795" y="432" width="1" height="1" fill="#484848"/><rect x="795" y="482" width="1" height="1" fill="#484848"/><rect x="795" y="532" width="1" height="1" fill="#484848"/><rect x="795" y="582" width="1" height="1" fill="#484848"/><rect x="795" y="632" width="1" height="1" fill="#484848"/><rect x="795" y="682" width="1" height="1" fill="#484848"/><rect x="845" y="182" width="1" height="1" fill="#484848"/><rect x="845" y="232" width="1" height="1" fill="#484848"/><rect x="845" y="282" width="1" height="1" fill="#484848"/><rect x="845" y="332" width="1" height="1" fill="#484848"/><rect x="845" y="382" width="1" height="1" fill="#484848"/><rect x="845" y="432" width="1" height="1" fill="#484848"/><rect x="845" y="482" width="1" height="1" fill="#484848"/><rect x="845" y="532" width="1" height="1" fill="#484848"/><rect x="845" y="582" width="1" height="1" fill="#484848"/><rect x="845" y="632" width="1" height="1" fill="#484848"/><rect x="845" y="682" width="1" height="1" fill="#484848"/><rect x="895" y="182" width="1" height="1" fill="#484848"/><rect x="895" y="232" width="1" height="1" fill="#484848"/><rect x="895" y="282" width="1" height="1" fill="#484848"/><rect x="895" y="332" width="1" height="1" fill="#484848"/><rect x="895" y="382" width="1" height="1" fill="#484848"/><rect x="895" y="432" width="1" height="1" fill="#484848"/><rect x="895" y="482" width="1" height="1" fill="#484848"/><rect x="895" y="532" width="1" height="1" fill="#484848"/><rect x="895" y="582" width="1" height="1" fill="#484848"/><rect x="895" y="632" width="1" height="1" fill="#484848"/><rect x="895" y="682" width="1" height="1" fill="#484848"/><rect x="945" y="182" width="1" height="1" fill="#484848"/><rect x="945" y="232" width="1" height="1" fill="#484848"/><rect x="945" y="282" width="1" height="1" fill="#484848"/><rect x="945" y="332" width="1" height="1" fill="#484848"/><rect x="945" y="382" width="1" height="1" fill="#484848"/><rect x="945" y="432" width="1" height="1" fill="#484848"/><rect x="945" y="482" width="1" height="1" fill="#484848"/><rect x="945" y="532" width="1" height="1" fill="#484848"/><rect x="945" y="582" width="1" height="1" fill="#484848"/><rect x="945" y="632" width="1" height="1" fill="#484848"/><rect x="945" y="682" width="1" height="1" fill="#484848"/><rect x="995" y="182" width="1" height="1" fill="#484848"/><rect x="995" y="232" width="1" height="1" fill="#484848"/><rect x="995" y="282" width="1" height="1" fill="#484848"/><rect x="995" y="332" width="1" height="1" fill="#484848"/><rect x="995" y="382" width="1" height="1" fill="#484848"/><rect x="995" y="432" width="1" height="1" fill="#484848"/><rect x="995" y="482" width="1" height="1" fill="#484848"/><rect x="995" y="532" width="1" height="1" fill="#484848"/><rect x="995" y="582" width="1" height="1" fill="#484848"/><rect x="995" y="632" width="1" height="1" fill="#484848"/><rect x="995" y="682" width="1" height="1" fill="#484848"/><rect x="1045" y="182" width="1" height="1" fill="#484848"/><rect x="1045" y="232" width="1" height="1" fill="#484848"/><rect x="1045" y="282" width="1" height="1" fill="#484848"/><rect x="1045" y="332" width="1" height="1" fill="#484848"/><rect x="1045" y="382" width="1" height="1" fill="#484848"/><rect x="1045" y="432" width="1" height="1" fill="#484848"/><rect x="1045" y="482" width="1" height="1" fill="#484848"/><rect x="1045" y="532" width="1" height="1" fill="#484848"/><rect x="1045" y="582" width="1" height="1" fill="#484848"/><rect x="1045" y="632" width="1" height="1" fill="#484848"/><rect x="1045" y="682" width="1" height="1" fill="#484848"/><rect x="1095" y="182" width="1" height="1" fill="#484848"/><rect x="1095" y="232" width="1" height="1" fill="#484848"/><rect x="1095" y="282" width="1" height="1" fill="#484848"/><rect x="1095" y="332" width="1" height="1" fill="#484848"/><rect x="1095" y="382" width="1" height="1" fill="#484848"/><rect x="1095" y="432" width="1" height="1" fill="#484848"/><rect x="1095" y="482" width="1" height="1" fill="#484848"/><rect x="1095" y="532" width="1" height="1" fill="#484848"/><rect x="1095" y="582" width="1" height="1" fill="#484848"/><rect x="1095" y="632" width="1" height="1" fill="#484848"/><rect x="1095" y="682" width="1" height="1" fill="#484848"/><rect x="344" y="562" width="2" height="40" fill="#5c0909"/><rect x="325" y="581" width="40" height="2" fill="#5c0909"/><line x1="95" y1="503" x2="1138" y2="503" stroke="#2a2004" stroke-width="2"/><line x1="114" y1="155" x2="114" y2="732" stroke="#2a2004" stroke-width="2"/><line x1="96" y1="503" x2="1138" y2="503" stroke="#4e3b08" stroke-width="2" stroke-dasharray="4 2" /><line x1="114" y1="156" x2="114" y2="732" stroke="#4e3b08" stroke-width="2" stroke-dasharray="4 2"/><line x1="495" y1="332" x2="719" y2="225.5" stroke="#fff" stroke-width="1.7" stroke-linecap="round"/><line x1="114" y1="503" x2="495" y2="482" stroke="#fff" stroke-width="1.7" stroke-linecap="round"/><circle cx="495" cy="482" r="4.8" fill="none" stroke="#a80000" stroke-width="1"/><path d="M490.5 482 h9 M495 477.5 v9" stroke="#a80000" stroke-width="1" opacity="0.8"/></svg>
<svg class="a" style="left:0;top:0" width="1160" height="760" viewBox="0 0 1160 760"><rect x="95" y="148" width="1" height="7" fill="#6a6a6a"/><rect x="145" y="148" width="1" height="7" fill="#6a6a6a"/><rect x="195" y="148" width="1" height="7" fill="#6a6a6a"/><rect x="245" y="148" width="1" height="7" fill="#6a6a6a"/><rect x="295" y="148" width="1" height="7" fill="#6a6a6a"/><rect x="345" y="148" width="1" height="7" fill="#6a6a6a"/><rect x="395" y="148" width="1" height="7" fill="#6a6a6a"/><rect x="445" y="148" width="1" height="7" fill="#6a6a6a"/><rect x="495" y="148" width="1" height="7" fill="#6a6a6a"/><rect x="545" y="148" width="1" height="7" fill="#6a6a6a"/><rect x="595" y="148" width="1" height="7" fill="#6a6a6a"/><rect x="645" y="148" width="1" height="7" fill="#6a6a6a"/><rect x="695" y="148" width="1" height="7" fill="#6a6a6a"/><rect x="745" y="148" width="1" height="7" fill="#6a6a6a"/><rect x="795" y="148" width="1" height="7" fill="#6a6a6a"/><rect x="845" y="148" width="1" height="7" fill="#6a6a6a"/><rect x="895" y="148" width="1" height="7" fill="#6a6a6a"/><rect x="945" y="148" width="1" height="7" fill="#6a6a6a"/><rect x="995" y="148" width="1" height="7" fill="#6a6a6a"/><rect x="1045" y="148" width="1" height="7" fill="#6a6a6a"/><rect x="1095" y="148" width="1" height="7" fill="#6a6a6a"/><rect x="88" y="182" width="7" height="1" fill="#6a6a6a"/><rect x="88" y="232" width="7" height="1" fill="#6a6a6a"/><rect x="88" y="282" width="7" height="1" fill="#6a6a6a"/><rect x="88" y="332" width="7" height="1" fill="#6a6a6a"/><rect x="88" y="382" width="7" height="1" fill="#6a6a6a"/><rect x="88" y="432" width="7" height="1" fill="#6a6a6a"/><rect x="88" y="482" width="7" height="1" fill="#6a6a6a"/><rect x="88" y="532" width="7" height="1" fill="#6a6a6a"/><rect x="88" y="582" width="7" height="1" fill="#6a6a6a"/><rect x="88" y="632" width="7" height="1" fill="#6a6a6a"/><rect x="88" y="682" width="7" height="1" fill="#6a6a6a"/><path d="M108.7 145 L119.9 145 L114.3 151 Z" fill="#000"/><path d="M79.2 115.6 L86.8 123.6 M86.8 115.6 L79.2 123.6" stroke="#6a6a6a" stroke-width="1"/><circle cx="102.2" cy="119" r="5.6" fill="#f4f4f4" stroke="#27408b" stroke-width="2"/><circle cx="102.2" cy="119" r="6.8" fill="none" stroke="#8aa0d0" stroke-width="0.7" opacity="0.8"/><path d="M98.5 119 h6 M102 115.5 v6" stroke="#e08080" stroke-width="0.6"/><path d="M102.8 119.6 L106.6 123.6" stroke="#f0a020" stroke-width="2"/><circle cx="107.3" cy="124.4" r="1" fill="#e07070"/></svg>
<div class="a" style="left:95px;top:132px;width:20px;height:14px;overflow:hidden"><span class="t " style="left:-6.91014px;top:0.8px;font-size:9.7px;color:#111;letter-spacing:-0.2px;-webkit-text-stroke:0.05px #111;">-50</span></div>
<span class="t " style="left:138.09px;top:132.8px;font-size:9.7px;color:#111;letter-spacing:-0.2px;-webkit-text-stroke:0.05px #111;">-40</span>
<span class="t " style="left:188.09px;top:132.8px;font-size:9.7px;color:#111;letter-spacing:-0.2px;-webkit-text-stroke:0.05px #111;">-30</span>
<span class="t " style="left:238.09px;top:132.8px;font-size:9.7px;color:#111;letter-spacing:-0.2px;-webkit-text-stroke:0.05px #111;">-20</span>
<span class="t " style="left:288.09px;top:132.8px;font-size:9.7px;color:#111;letter-spacing:-0.2px;-webkit-text-stroke:0.05px #111;">-10</span>
<span class="t " style="left:342.203px;top:132.8px;font-size:9.7px;color:#111;letter-spacing:-0.2px;-webkit-text-stroke:0.05px #111;">0</span>
<span class="t " style="left:389.605px;top:132.8px;font-size:9.7px;color:#111;letter-spacing:-0.2px;-webkit-text-stroke:0.05px #111;">10</span>
<span class="t " style="left:439.605px;top:132.8px;font-size:9.7px;color:#111;letter-spacing:-0.2px;-webkit-text-stroke:0.05px #111;">20</span>
<span class="t " style="left:489.605px;top:132.8px;font-size:9.7px;color:#111;letter-spacing:-0.2px;-webkit-text-stroke:0.05px #111;">30</span>
<span class="t " style="left:539.605px;top:132.8px;font-size:9.7px;color:#111;letter-spacing:-0.2px;-webkit-text-stroke:0.05px #111;">40</span>
<span class="t " style="left:589.605px;top:132.8px;font-size:9.7px;color:#111;letter-spacing:-0.2px;-webkit-text-stroke:0.05px #111;">50</span>
<span class="t " style="left:639.605px;top:132.8px;font-size:9.7px;color:#111;letter-spacing:-0.2px;-webkit-text-stroke:0.05px #111;">60</span>
<span class="t " style="left:689.605px;top:132.8px;font-size:9.7px;color:#111;letter-spacing:-0.2px;-webkit-text-stroke:0.05px #111;">70</span>
<span class="t " style="left:739.605px;top:132.8px;font-size:9.7px;color:#111;letter-spacing:-0.2px;-webkit-text-stroke:0.05px #111;">80</span>
<span class="t " style="left:789.605px;top:132.8px;font-size:9.7px;color:#111;letter-spacing:-0.2px;-webkit-text-stroke:0.05px #111;">90</span>
<span class="t " style="left:837.008px;top:132.8px;font-size:9.7px;color:#111;letter-spacing:-0.2px;-webkit-text-stroke:0.05px #111;">100</span>
<span class="t " style="left:887.368px;top:132.8px;font-size:9.7px;color:#111;letter-spacing:-0.2px;-webkit-text-stroke:0.05px #111;">110</span>
<span class="t " style="left:937.008px;top:132.8px;font-size:9.7px;color:#111;letter-spacing:-0.2px;-webkit-text-stroke:0.05px #111;">120</span>
<span class="t " style="left:987.008px;top:132.8px;font-size:9.7px;color:#111;letter-spacing:-0.2px;-webkit-text-stroke:0.05px #111;">130</span>
<span class="t " style="left:1037.01px;top:132.8px;font-size:9.7px;color:#111;letter-spacing:-0.2px;-webkit-text-stroke:0.05px #111;">140</span>
<span class="t " style="left:1087.01px;top:132.8px;font-size:9.7px;color:#111;letter-spacing:-0.2px;-webkit-text-stroke:0.05px #111;">150</span>
<span class="t" style="left:73.3px;top:186.895px;font-size:9.7px;color:#111;letter-spacing:-0.2px;-webkit-text-stroke:0.05px #111;transform:rotate(-90deg);transform-origin:0 0;">80</span>
<span class="t" style="left:73.3px;top:236.895px;font-size:9.7px;color:#111;letter-spacing:-0.2px;-webkit-text-stroke:0.05px #111;transform:rotate(-90deg);transform-origin:0 0;">70</span>
<span class="t" style="left:73.3px;top:286.895px;font-size:9.7px;color:#111;letter-spacing:-0.2px;-webkit-text-stroke:0.05px #111;transform:rotate(-90deg);transform-origin:0 0;">60</span>
<span class="t" style="left:73.3px;top:336.895px;font-size:9.7px;color:#111;letter-spacing:-0.2px;-webkit-text-stroke:0.05px #111;transform:rotate(-90deg);transform-origin:0 0;">50</span>
<span class="t" style="left:73.3px;top:386.895px;font-size:9.7px;color:#111;letter-spacing:-0.2px;-webkit-text-stroke:0.05px #111;transform:rotate(-90deg);transform-origin:0 0;">40</span>
<span class="t" style="left:73.3px;top:436.895px;font-size:9.7px;color:#111;letter-spacing:-0.2px;-webkit-text-stroke:0.05px #111;transform:rotate(-90deg);transform-origin:0 0;">30</span>
<span class="t" style="left:73.3px;top:486.895px;font-size:9.7px;color:#111;letter-spacing:-0.2px;-webkit-text-stroke:0.05px #111;transform:rotate(-90deg);transform-origin:0 0;">20</span>
<span class="t" style="left:73.3px;top:536.895px;font-size:9.7px;color:#111;letter-spacing:-0.2px;-webkit-text-stroke:0.05px #111;transform:rotate(-90deg);transform-origin:0 0;">10</span>
<span class="t" style="left:73.3px;top:584.297px;font-size:9.7px;color:#111;letter-spacing:-0.2px;-webkit-text-stroke:0.05px #111;transform:rotate(-90deg);transform-origin:0 0;">0</span>
<span class="t" style="left:73.3px;top:638.41px;font-size:9.7px;color:#111;letter-spacing:-0.2px;-webkit-text-stroke:0.05px #111;transform:rotate(-90deg);transform-origin:0 0;">-10</span>
<span class="t" style="left:73.3px;top:688.41px;font-size:9.7px;color:#111;letter-spacing:-0.2px;-webkit-text-stroke:0.05px #111;transform:rotate(-90deg);transform-origin:0 0;">-20</span>
<div class="a" style="left:72px;top:720px;width:23px;height:12px;overflow:hidden"><span class="t" style="left:1.3px;top:18.4101px;font-size:9.7px;color:#111;letter-spacing:-0.2px;-webkit-text-stroke:0.05px #111;transform:rotate(-90deg);transform-origin:0 0;">-30</span></div>
<span class="t " style="left:592.3px;top:115px;font-size:11.5px;color:#1a1a1a;letter-spacing:0.134px;-webkit-text-stroke:0.3px #1a1a1a;">* Senza titolo 1</span>
<span class="t " style="left:1102.6px;top:734.2px;font-size:13px;color:#111;-webkit-text-stroke:0.2px #111;">10 &lt; 100</span>
<div class="a" style="left:0px;top:108px;width:72px;height:690px;background:linear-gradient(to right,#f6f6f6 0,#e9e9e9 2%,#e2e2e2 30%,#d2d2d2 75%,#cacaca 97%,#b9b9b9 97.3%,#b6b6b6 100%)"></div>
<svg class="a" style="left:0;top:108px" width="230" height="690" viewBox="0 108 230 690"><defs><linearGradient id="lb" x1="0" y1="0" x2="0" y2="1"><stop offset="0" stop-color="#ebebeb"/><stop offset="0.3" stop-color="#e6e6e6"/><stop offset="0.6" stop-color="#efefef"/><stop offset="1" stop-color="#f7f7f7"/></linearGradient><linearGradient id="lp" x1="0" y1="0" x2="0" y2="1"><stop offset="0" stop-color="#b8b8b8"/><stop offset="1" stop-color="#c6c6c6"/></linearGradient><radialGradient id="clk"><stop offset="0" stop-color="#fff" stop-opacity="0.2"/><stop offset="0.78" stop-color="#fff" stop-opacity="0.24"/><stop offset="0.86" stop-color="#dbe4ee" stop-opacity="0.55"/><stop offset="0.92" stop-color="#a3b6cb" stop-opacity="0.7"/><stop offset="0.965" stop-color="#8fa5bd" stop-opacity="0.5"/><stop offset="1" stop-color="#9db2c8" stop-opacity="0"/></radialGradient><linearGradient id="tip" x1="0" y1="0" x2="0" y2="1"><stop offset="0" stop-color="#fafbfc"/><stop offset="0.5" stop-color="#f0f3f7"/><stop offset="1" stop-color="#dde4ee"/></linearGradient><clipPath id="lclip"><rect x="0" y="108" width="72" height="690"/></clipPath></defs><rect x="7" y="116" width="2" height="2" fill="#a0a0a0"/><rect x="13" y="116" width="2" height="2" fill="#a0a0a0"/><rect x="19" y="116" width="2" height="2" fill="#a0a0a0"/><rect x="25" y="116" width="2" height="2" fill="#a0a0a0"/><rect x="31" y="116" width="2" height="2" fill="#a0a0a0"/><rect x="37" y="116" width="2" height="2" fill="#a0a0a0"/><rect x="43" y="116" width="2" height="2" fill="#a0a0a0"/><rect x="49" y="116" width="2" height="2" fill="#a0a0a0"/><rect x="55" y="116" width="2" height="2" fill="#a0a0a0"/><rect x="61" y="116" width="2" height="2" fill="#a0a0a0"/><g clip-path="url(#lclip)"><rect x="1.5" y="120.5" width="69" height="25" fill="url(#lb)" stroke="#8f8f8f" stroke-width="1"/><path d="M32 132.9 L40 128.8 L40 137 Z" fill="#000"/><rect x="1.5" y="156.5" width="34" height="34" fill="url(#lb)" stroke="#8f8f8f" stroke-width="1"/><rect x="36.5" y="156.5" width="34" height="34" fill="url(#lb)" stroke="#8f8f8f" stroke-width="1"/><rect x="1.5" y="199.5" width="34" height="34" fill="url(#lb)" stroke="#8f8f8f" stroke-width="1"/><rect x="36.5" y="199.5" width="34" height="34" fill="url(#lb)" stroke="#8f8f8f" stroke-width="1"/><rect x="1.5" y="234.5" width="34" height="34" fill="url(#lb)" stroke="#8f8f8f" stroke-width="1"/><rect x="36.5" y="234.5" width="34" height="34" fill="url(#lb)" stroke="#8f8f8f" stroke-width="1"/><rect x="1.5" y="269.5" width="34" height="34" fill="url(#lb)" stroke="#8f8f8f" stroke-width="1"/><rect x="36.5" y="269.5" width="34" height="34" fill="url(#lb)" stroke="#8f8f8f" stroke-width="1"/><rect x="1.5" y="312.5" width="34" height="34" fill="url(#lb)" stroke="#8f8f8f" stroke-width="1"/><rect x="36.5" y="312.5" width="34" height="34" fill="url(#lb)" stroke="#8f8f8f" stroke-width="1"/><rect x="1.5" y="355.5" width="34" height="34" fill="url(#lb)" stroke="#8f8f8f" stroke-width="1"/><rect x="36.5" y="355.5" width="34" height="34" fill="url(#lb)" stroke="#8f8f8f" stroke-width="1"/><rect x="1.5" y="398.5" width="34" height="34" fill="url(#lb)" stroke="#8f8f8f" stroke-width="1"/><rect x="36.5" y="398.5" width="34" height="34" fill="url(#lb)" stroke="#8f8f8f" stroke-width="1"/><rect x="1.5" y="484.5" width="34" height="34" fill="url(#lb)" stroke="#8f8f8f" stroke-width="1"/><rect x="36.5" y="484.5" width="34" height="34" fill="url(#lb)" stroke="#8f8f8f" stroke-width="1"/><rect x="1.5" y="527.5" width="34" height="34" fill="url(#lb)" stroke="#8f8f8f" stroke-width="1"/><rect x="36.5" y="527.5" width="34" height="34" fill="url(#lb)" stroke="#8f8f8f" stroke-width="1"/><rect x="1.5" y="570.5" width="34" height="34" fill="url(#lb)" stroke="#8f8f8f" stroke-width="1"/><rect x="1.5" y="648.5" width="34" height="34" fill="url(#lb)" stroke="#8f8f8f" stroke-width="1"/><rect x="36.5" y="648.5" width="34" height="34" fill="url(#lb)" stroke="#8f8f8f" stroke-width="1"/><rect x="1.5" y="683.5" width="34" height="34" fill="url(#lb)" stroke="#8f8f8f" stroke-width="1"/><rect x="1.5" y="726.5" width="34" height="34" fill="url(#lb)" stroke="#8f8f8f" stroke-width="1"/><rect x="36.5" y="726.5" width="34" height="34" fill="url(#lb)" stroke="#8f8f8f" stroke-width="1"/><rect x="1.5" y="769.5" width="34" height="34" fill="url(#lb)" stroke="#8f8f8f" stroke-width="1"/><rect x="1.5" y="441.5" width="34" height="34" rx="3.5" fill="url(#lp)" stroke="#9c9c9c" stroke-width="1"/><rect x="1.5" y="613.5" width="34" height="34" rx="3.5" fill="url(#lp)" stroke="#9c9c9c" stroke-width="1"/><rect x="36.5" y="613.5" width="34" height="34" fill="url(#lb)" stroke="#8f8f8f" stroke-width="1"/><path d="M13.6 172.6 h8 M17.6 168.6 v8" fill="none" stroke="#000" stroke-width="1" /><circle cx="42.5" cy="162.5" r="1.7" fill="#ff0000"/><circle cx="42.5" cy="169.5" r="1.7" fill="#ff0000"/><circle cx="42.5" cy="176.5" r="1.7" fill="#ff0000"/><circle cx="42.5" cy="183.5" r="1.7" fill="#ff0000"/><circle cx="49.5" cy="162.5" r="1.7" fill="#ff0000"/><circle cx="49.5" cy="169.5" r="1.7" fill="#ff0000"/><circle cx="49.5" cy="176.5" r="1.7" fill="#ff0000"/><circle cx="49.5" cy="183.5" r="1.7" fill="#ff0000"/><circle cx="56.5" cy="162.5" r="1.7" fill="#ff0000"/><circle cx="56.5" cy="169.5" r="1.7" fill="#ff0000"/><circle cx="56.5" cy="176.5" r="1.7" fill="#ff0000"/><circle cx="56.5" cy="183.5" r="1.7" fill="#ff0000"/><circle cx="63.5" cy="162.5" r="1.7" fill="#ff0000"/><circle cx="63.5" cy="169.5" r="1.7" fill="#ff0000"/><circle cx="63.5" cy="176.5" r="1.7" fill="#ff0000"/><circle cx="63.5" cy="183.5" r="1.7" fill="#ff0000"/><path d="M15.9 205.4 Q16.5 217 28.4 218" fill="none" stroke="#1a1a1a" stroke-width="1" /><line x1="7.4" y1="215.2" x2="28.4" y2="226.5" stroke="#1a1a1a" stroke-width="1" /><circle cx="15.9" cy="205.4" r="1.9" fill="#ff0000"/><circle cx="7.4" cy="215.2" r="1.9" fill="#ff0000"/><circle cx="28.4" cy="218" r="1.9" fill="#ff0000"/><circle cx="28.4" cy="226.5" r="1.9" fill="#ff0000"/><line x1="42.5" y1="216.6" x2="64" y2="205" stroke="#1a1a1a" stroke-width="1" /><path d="M63.5 213.8 Q53 214.5 50.9 226.3" fill="none" stroke="#1a1a1a" stroke-width="1" /><circle cx="42.5" cy="216.6" r="1.8" fill="#ff0000"/><circle cx="47.7" cy="214" r="1.8" fill="#ff0000"/><circle cx="52.9" cy="210.9" r="1.8" fill="#ff0000"/><circle cx="58.3" cy="208.1" r="1.8" fill="#ff0000"/><circle cx="64" cy="205" r="1.8" fill="#ff0000"/><circle cx="63.5" cy="213.8" r="1.8" fill="#ff0000"/><circle cx="58.6" cy="214.9" r="1.8" fill="#ff0000"/><circle cx="54.3" cy="217.4" r="1.8" fill="#ff0000"/><circle cx="51.9" cy="221.5" r="1.8" fill="#ff0000"/><circle cx="50.9" cy="226.3" r="1.8" fill="#ff0000"/><line x1="9.5" y1="241.2" x2="19.4" y2="252.3" stroke="#1a1a1a" stroke-width="1" /><path d="M15.6 261.4 Q16.5 255 19.4 252.3 Q23 249.2 28.4 248.8" fill="none" stroke="#1a1a1a" stroke-width="1" /><path d="M16.8 249.4 Q20 245.8 23.6 249.6" fill="none" stroke="#444" stroke-width="0.6" /><circle cx="19.6" cy="248.4" r="0.5" fill="#222"/><circle cx="19.4" cy="252.3" r="1.9" fill="#ff0000"/><circle cx="56.4" cy="248.1" r="6.6" fill="none" stroke="#1a1a1a" stroke-width="1"/><line x1="50.7" y1="245.2" x2="43.1" y2="259.7" stroke="#1a1a1a" stroke-width="1" /><circle cx="50.7" cy="245.2" r="1.9" fill="#ff0000"/><line x1="6.4" y1="286.6" x2="28.4" y2="275.6" stroke="#1a1a1a" stroke-width="1" /><path d="M15.2 296.6 Q16.5 284 28.4 283.2" fill="none" stroke="#1a1a1a" stroke-width="1" /><circle cx="17.5" cy="281.1" r="1.9" fill="#ff0000"/><circle cx="28" cy="296" r="1.9" fill="#ff0000"/><circle cx="52.9" cy="285.9" r="10.1" fill="none" stroke="#1a1a1a" stroke-width="1"/><circle cx="52.9" cy="285.9" r="1.9" fill="#ff0000"/><circle cx="52.9" cy="275.8" r="1.9" fill="#ff0000"/><circle cx="52.9" cy="296" r="1.9" fill="#ff0000"/><circle cx="42.8" cy="285.9" r="1.9" fill="#ff0000"/><circle cx="63" cy="285.9" r="1.9" fill="#ff0000"/><line x1="7.1" y1="329.9" x2="28.9" y2="318.3" stroke="#1a1a1a" stroke-width="1" /><path d="M15.6 339.7 Q17 327.5 28.7 326.8" fill="none" stroke="#1a1a1a" stroke-width="1" /><circle cx="18" cy="324.1" r="1.9" fill="#ff0000"/><circle cx="19.4" cy="330.4" r="1.9" fill="#ff0000"/><rect x="41.4" y="319.6" width="23.4" height="18.8" fill="none" stroke="#333" stroke-width="1.1"/><line x1="43.8" y1="335.6" x2="63" y2="320.9" stroke="#888" stroke-width="0.7" stroke-dasharray="2.4 2"/><circle cx="52.9" cy="329" r="1.9" fill="#ff0000"/><line x1="8.3" y1="372.6" x2="29" y2="361.2" stroke="#1a1a1a" stroke-width="1" /><path d="M16.5 382 Q17.5 371.5 28.8 369.7" fill="none" stroke="#1a1a1a" stroke-width="1" /><path d="M6.2 368.4 L12.6 365.2" fill="none" stroke="#000" stroke-width="1.6" /><path d="M13.4 364.6 L10 364.8 L11.8 367.6 Z" fill="#000" stroke="#000" stroke-width="0.5" /><path d="M21.4 381.6 L21.4 377" fill="none" stroke="#000" stroke-width="1.6" /><path d="M21.4 375.6 L19.8 378.6 L23 378.6 Z" fill="#000" stroke="#000" stroke-width="0.5" /><circle cx="15.3" cy="368.9" r="1.9" fill="#ff0000"/><circle cx="19" cy="374" r="1.9" fill="#ff0000"/><line x1="49.9" y1="368.7" x2="63.5" y2="361" stroke="#222" stroke-width="0.9" stroke-dasharray="2.4 2"/><circle cx="63.7" cy="360.8" r="0.9" fill="#000"/><circle cx="42.6" cy="372.8" r="1" fill="#000"/><path d="M41.4 368.6 L46.6 366.6" fill="none" stroke="#000" stroke-width="1.6" /><path d="M47.6 366 L44.4 365.8 L45.6 368.6 Z" fill="#000" stroke="#000" stroke-width="0.5" /><circle cx="49.9" cy="368.7" r="1.9" fill="#ff0000"/><line x1="5.9" y1="412.7" x2="30.2" y2="419.9" stroke="#1a1a1a" stroke-width="1" /><line x1="24.7" y1="402.8" x2="18.3" y2="427" stroke="#1a1a1a" stroke-width="1" /><circle cx="21" cy="417.4" r="1.9" fill="#ff0000"/><line x1="43" y1="416.7" x2="53.3" y2="419.9" stroke="#1a1a1a" stroke-width="1" /><line x1="62.7" y1="406.5" x2="60.3" y2="416.9" stroke="#1a1a1a" stroke-width="1" /><circle cx="58.7" cy="421.5" r="1.9" fill="#ff0000"/><path d="M15.5 489.3 V504.2 H30.4" fill="none" stroke="#333" stroke-width="1.1" /><circle cx="27.9" cy="490.9" r="1.6" fill="#e06070"/><path d="M9.8 552 V535.8 H26.1" fill="none" stroke="#b0b0b0" stroke-width="0.7" /><circle cx="26.1" cy="535.8" r="1.1" fill="#000"/><circle cx="9.8" cy="552" r="1.1" fill="#000"/><circle cx="9.8" cy="535.8" r="2.4" fill="#ff0000"/><circle cx="44.8" cy="552" r="1.1" fill="#000"/><circle cx="60.3" cy="535.8" r="1" fill="#000"/><text x="54" y="540.6" font-family="Liberation Sans, sans-serif" font-size="9.6" fill="#222">2</text><g opacity="0.45"><path d="M7 579 Q7 577.4 8.6 577.4 H28 V596.4 H14 V592.4 H7 Z" fill="none" stroke="#ff3030" stroke-width="0.8" /><circle cx="13.3" cy="584.3" r="3.2" fill="none" stroke="#ff3030" stroke-width="0.8"/><path d="M18.4 591.4 H24.6 V584 Z" fill="none" stroke="#ff3030" stroke-width="0.8" /></g><circle cx="17.9" cy="587" r="1.7" fill="#ff0000"/><path d="M14.4 630.3 h7.4 M18.1 626.6 v7.4" fill="none" stroke="#444" stroke-width="1" /><line x1="41" y1="629.5" x2="64.5" y2="629.5" stroke="#000" stroke-width="1.1" /><line x1="52.5" y1="617.7" x2="52.5" y2="641.2" stroke="#000" stroke-width="1.1" /><circle cx="52.5" cy="629.5" r="3.3" fill="none" stroke="#ff0000" stroke-width="0.9"/><path d="M49.2 629.5 h6.6 M52.5 626.2 v6.6" stroke="#ff0000" stroke-width="0.8"/><line x1="5.9" y1="664.5" x2="29.3" y2="664.5" stroke="#000" stroke-width="1.1" /><circle cx="17.6" cy="664.5" r="3.3" fill="none" stroke="#ff0000" stroke-width="0.9"/><path d="M14.3 664.5 h6.6 M17.6 661.2 v6.6" stroke="#ff0000" stroke-width="0.8"/><line x1="52.5" y1="652.7" x2="52.5" y2="676.6" stroke="#000" stroke-width="1.1" /><circle cx="52.5" cy="664.5" r="3.3" fill="none" stroke="#ff0000" stroke-width="0.9"/><path d="M49.2 664.5 h6.6 M52.5 661.2 v6.6" stroke="#ff0000" stroke-width="0.8"/><line x1="25.7353" y1="708.118" x2="30.2182" y2="707.726" stroke="#aaa" stroke-width="0.8" /><line x1="24.7748" y1="703.786" x2="29.0034" y2="702.247" stroke="#aaa" stroke-width="0.8" /><line x1="22.1962" y1="699.134" x2="25.7422" y2="696.363" stroke="#aaa" stroke-width="0.8" /><line x1="18.5508" y1="695.674" x2="21.1319" y2="691.988" stroke="#aaa" stroke-width="0.8" /><line x1="14.0533" y1="693.432" x2="15.4439" y2="689.152" stroke="#aaa" stroke-width="0.8" /><line x1="9.39329" y1="692.61" x2="9.55034" y2="688.113" stroke="#aaa" stroke-width="0.8" /><line x1="8.8" y1="709.2" x2="27" y2="698.5" stroke="#000" stroke-width="1.1" /><circle cx="8.8" cy="709.2" r="3.6" fill="none" stroke="#ff0000" stroke-width="0.9"/><path d="M5.2 709.2 h7.2 M8.8 705.6 v7.2" stroke="#ff0000" stroke-width="0.8"/><circle cx="14.9" cy="737.3" r="3.5" fill="none" stroke="#ff0000" stroke-width="0.9"/><path d="M11.4 737.3 h7 M14.9 733.8 v7" stroke="#ff0000" stroke-width="0.8"/><path d="M16.6 739.4 V749.6 L19 747.4 L20.6 751.4 L22.2 750.6 L20.6 746.8 L23.6 746.6 Z" fill="#e8e8e8" stroke="#666" stroke-width="0.8" /><ellipse cx="46.2" cy="738.3" rx="2.4" ry="3.7" fill="none" stroke="#000" stroke-width="1.3"/><path d="M48.8 737.4 H62" fill="none" stroke="#000" stroke-width="1.7" /><rect x="57" y="737.4" width="5" height="4" fill="#000"/><rect x="59.1" y="739.2" width="1" height="2.2" fill="#999"/><circle cx="52.6" cy="750.7" r="3.4" fill="none" stroke="#ff0000" stroke-width="0.9"/><path d="M49.2 750.7 h6.8 M52.6 747.3 v6.8" stroke="#ff0000" stroke-width="0.8"/><ellipse cx="11.1" cy="785.5" rx="2.4" ry="3.7" fill="none" stroke="#000" stroke-width="1.3"/><path d="M13.7 784.6 H26.9" fill="none" stroke="#000" stroke-width="1.7" /><rect x="21.9" y="784.6" width="5" height="4" fill="#000"/><rect x="24" y="786.4" width="1" height="2.2" fill="#999"/></g><rect x="36" y="484.5" width="35" height="34.5" fill="#ff5a5a" opacity="0.36"/><path d="M27 484.3 H80 M27 518.8 H80 M35.8 475 V531 M70.6 475 V531" stroke="#d83c3c" stroke-width="1.5" opacity="0.7"/><circle cx="61" cy="508.3" r="40" fill="url(#clk)"/><path d="M57.6 493.6 L41 510.1 H65" fill="none" stroke="#2a1414" stroke-width="1.2" /><path d="M57.6 493.6 Q64 500 65 510.1" fill="none" stroke="#2a1414" stroke-width="1.1" /><circle cx="57.6" cy="493.6" r="1.9" fill="#ff0000"/><path d="M85.3 496.8 L91.2 503 L85.3 509 Z" fill="#000"/><rect x="49.5" y="538" width="168" height="24.5" rx="3" fill="#000" opacity="0.18"/><rect x="48.5" y="536" width="168.5" height="25" rx="3" fill="url(#tip)" stroke="#c9cdd6" stroke-width="0.8"/><path d="M61.6 509.6 L61.6 530.4 L66.2 526.2 L70.2 535.6 L74 534 L70 524.8 L76.4 524.6 Z" fill="#fff" stroke="#000" stroke-width="1.3" stroke-linejoin="miter"/></svg>
<span class="t " style="left:7.3px;top:453.6px;font-size:9.5px;color:#222;letter-spacing:0.186px;font-family:'DejaVu Sans','Liberation Sans',sans-serif;">Auto</span>
<span class="t " style="left:6.8px;top:486.1px;font-size:10.8px;color:#333;font-family:'DejaVu Sans','Liberation Sans',sans-serif;">y</span>
<span class="t " style="left:24.6px;top:503.9px;font-size:10.5px;color:#333;font-family:'DejaVu Sans','Liberation Sans',sans-serif;">x</span>
<span class="t " style="left:43.8px;top:492.3px;font-size:10.8px;color:#2a1414;font-family:'DejaVu Sans','Liberation Sans',sans-serif;z-index:3;">r</span>
<span class="t " style="left:54.4px;top:498.6px;font-size:10.8px;color:#2a1414;font-family:'DejaVu Sans','Liberation Sans',sans-serif;z-index:3;">α</span>
<span class="t " style="left:23.8px;top:538px;font-size:10.6px;color:#222;">2</span>
<span class="t " style="left:13.2px;top:545.6px;font-size:10.6px;color:#222;">1</span>
<span class="t " style="left:42.3px;top:539.2px;font-size:10.6px;color:#222;">1</span>
<span class="t " style="left:60.8px;top:365.6px;font-size:10.8px;color:#222;">2</span>
<span class="t " style="left:40.1px;top:375.4px;font-size:11px;color:#222;">1</span>
<span class="t " style="left:53px;top:541.2px;font-size:14.3px;color:#000;letter-spacing:-0.117px;z-index:5;-webkit-text-stroke:0.15px #000;">Ingresso coordinate polari</span>
<div class="a" style="left:1154px;top:108px;width:2px;height:690px;background:linear-gradient(to right,#b4b4b4,#c4c4c4)"></div>
<div class="a" style="left:1156px;top:108px;width:298px;height:22px;background:linear-gradient(#ededed,#e4e4e4 60%,#d6d6d6)"></div>
<div class="a" style="left:1156px;top:130px;width:298px;height:668px;background:#fff"></div>
<div class="a" style="left:1155.5px;top:130.5px;width:60.2px;height:25.5px;background:linear-gradient(#f3f3f3,#ebebeb 55%,#e2e2e2);border:1px solid #b3b3b3;"></div>
<div class="a" style="left:1214.7px;top:130.5px;width:61px;height:25.5px;background:linear-gradient(#f3f3f3,#ebebeb 55%,#e2e2e2);border:1px solid #b3b3b3;"></div>
<div class="a" style="left:1274.7px;top:130.5px;width:61px;height:25.5px;background:linear-gradient(#f3f3f3,#ebebeb 55%,#e2e2e2);border:1px solid #b3b3b3;"></div>
<div class="a" style="left:1334.7px;top:130.5px;width:61px;height:25.5px;background:linear-gradient(#f3f3f3,#ebebeb 55%,#e2e2e2);border:1px solid #b3b3b3;"></div>
<div class="a" style="left:1394.7px;top:130.5px;width:59.8px;height:25.5px;background:linear-gradient(#f3f3f3,#ebebeb 55%,#e2e2e2);border:1px solid #b3b3b3;"></div>
<div class="a" style="left:1156px;top:155.5px;width:298px;height:1px;background:#b3b3b3"></div>
<svg class="a" style="left:0;top:0" width="1500" height="520" viewBox="0 0 1500 520"><circle cx="1164" cy="118" r="7" fill="#5f5f5f"/><path d="M1161 115 L1167 121 M1167 115 L1161 121" stroke="#fff" stroke-width="1.8"/><circle cx="1182" cy="118" r="7" fill="#5f5f5f"/><rect x="1180.6" y="114.8" width="5" height="4" fill="none" stroke="#fff" stroke-width="1"/><rect x="1178.4" y="117.2" width="5" height="4" fill="#5f5f5f" stroke="#fff" stroke-width="1"/><g transform="translate(1184.8 142.7) scale(0.95)" opacity="1"><path d="M-8.4 0.6 Q-4.4 -5.8 1 -5.6 Q5.8 -5.2 8.4 0 Q5.4 5.6 0.4 5.8 Q-4.6 5.4 -8.4 0.6 Z" fill="#000"/><path d="M-4.6 1.6 Q-2.6 -1.4 0.5 -1.6 Q3.4 -1.4 5.2 1 Q3 3.8 0.3 3.8 Q-2.6 3.6 -4.6 1.6 Z" fill="#fff"/><ellipse cx="0.5" cy="0.6" rx="2.7" ry="2.9" fill="#000"/><circle cx="-0.3" cy="-0.5" r="0.6" fill="#fff" opacity="0.8"/></g><g transform="translate(1244.8 142.7) scale(0.95)" opacity="1"><path d="M-8.4 0.6 Q-4.4 -5.8 1 -5.6 Q5.8 -5.2 8.4 0 Q5.4 5.6 0.4 5.8 Q-4.6 5.4 -8.4 0.6 Z" fill="#a8a8a8"/><path d="M-4.6 1.6 Q-2.6 -1.4 0.5 -1.6 Q3.4 -1.4 5.2 1 Q3 3.8 0.3 3.8 Q-2.6 3.6 -4.6 1.6 Z" fill="#fff"/><ellipse cx="0.5" cy="0.6" rx="2.7" ry="2.9" fill="#a8a8a8"/><circle cx="-0.3" cy="-0.5" r="0.6" fill="#fff" opacity="0.8"/></g><path d="M1299.3 143 h11 M1304.8 137.5 v11" stroke="#e00000" stroke-width="2.6"/><path d="M1299.3 143 h11 M1304.8 137.5 v11" stroke="#ff3030" stroke-width="1" opacity="0.6"/><path d="M1359 143 h11.6" stroke="#e00000" stroke-width="2.6"/><g transform="translate(1417.4 135.6) scale(1.08)"><path d="M0.3 12.6 L1.6 8.6 L10.6 0.8 Q12.4 0 13.4 1.4 Q14 2.6 13 3.6 L4 11.6 Z" fill="#e8a33d" stroke="#8f5a14" stroke-width="0.7" stroke-linejoin="round"/><path d="M10.2 1.2 Q12.2 -0.2 13.4 1.4 Q14 2.6 12.8 3.8 Z" fill="#e0202a"/><path d="M0.3 12.6 L1.6 8.6 L4 11.6 Z" fill="#d9b88a"/><path d="M0.3 12.6 L0.9 10.9 L1.9 12.1 Z" fill="#333"/><path d="M2.6 9.6 L11.4 2" stroke="#f6c870" stroke-width="1"/></g><rect x="1161.5" y="163.6" width="15" height="8" fill="#fff" stroke="#000" stroke-width="1"/><g transform="translate(1394.6 160.8) scale(0.98)"><path d="M0.3 12.6 L1.6 8.6 L10.6 0.8 Q12.4 0 13.4 1.4 Q14 2.6 13 3.6 L4 11.6 Z" fill="#e8a33d" stroke="#8f5a14" stroke-width="0.7" stroke-linejoin="round"/><path d="M10.2 1.2 Q12.2 -0.2 13.4 1.4 Q14 2.6 12.8 3.8 Z" fill="#e0202a"/><path d="M0.3 12.6 L1.6 8.6 L4 11.6 Z" fill="#d9b88a"/><path d="M0.3 12.6 L0.9 10.9 L1.9 12.1 Z" fill="#333"/><path d="M2.6 9.6 L11.4 2" stroke="#f6c870" stroke-width="1"/></g><g transform="translate(1423.3 167) scale(0.92)" opacity="1"><path d="M-8.4 0.6 Q-4.4 -5.8 1 -5.6 Q5.8 -5.2 8.4 0 Q5.4 5.6 0.4 5.8 Q-4.6 5.4 -8.4 0.6 Z" fill="#000"/><path d="M-4.6 1.6 Q-2.6 -1.4 0.5 -1.6 Q3.4 -1.4 5.2 1 Q3 3.8 0.3 3.8 Q-2.6 3.6 -4.6 1.6 Z" fill="#fff"/><ellipse cx="0.5" cy="0.6" rx="2.7" ry="2.9" fill="#000"/><circle cx="-0.3" cy="-0.5" r="0.6" fill="#fff" opacity="0.8"/></g><path d="M1442.2 166 V164 Q1442.2 161 1445 161 Q1447.8 161 1447.8 164 V166" fill="none" stroke="#b4b4b4" stroke-width="1.3"/><rect x="1440" y="165.8" width="10" height="7.6" fill="#b4b4b4"/></svg>
<span class="t " style="left:1280.3px;top:112.8px;font-size:12px;color:#222;letter-spacing:-0.021px;">Elenco dei livelli</span>
<span class="t " style="left:1183.2px;top:160.6px;font-size:13px;color:#000;">0</span>
<div class="a" style="left:1454px;top:108px;width:46px;height:690px;background:linear-gradient(to right,#b0b0b0 0,#b0b0b0 1px,#eeeeee 1px,#e4e4e4 12px,#d4d4d4 34px,#cacaca 44px,#b8b8b8 44px,#b4b4b4 46px)"></div>
<svg class="a" style="left:1454px;top:108px" width="46" height="400" viewBox="1454 108 46 400"><rect x="1462" y="116" width="2" height="2" fill="#a0a0a0"/><rect x="1468" y="116" width="2" height="2" fill="#a0a0a0"/><rect x="1474" y="116" width="2" height="2" fill="#a0a0a0"/><rect x="1480" y="116" width="2" height="2" fill="#a0a0a0"/><rect x="1486" y="116" width="2" height="2" fill="#a0a0a0"/><line x1="1458" y1="261.5" x2="1499" y2="261.5" stroke="#555" stroke-width="1" stroke-dasharray="1 2"/><line x1="1458" y1="409.5" x2="1499" y2="409.5" stroke="#555" stroke-width="1" stroke-dasharray="1 2"/><rect x="1456" y="120" width="42.6" height="42.6" rx="5" fill="#b4b4b4"/><rect x="1456" y="417.2" width="42.6" height="42.6" rx="5" fill="#b4b4b4"/><g transform="translate(1463 127)"><rect x="0.5" y="0.5" width="27" height="27" fill="#fff" stroke="#4a4a4a" stroke-width="1"/><rect x="0" y="0" width="28" height="4.6" fill="#000"/><rect x="1" y="1" width="3" height="3" fill="#fff"/><path d="M7.5 13 L14 9.6 L14 19 L7.5 22 Z" fill="#c8c8c8" stroke="#555" stroke-width="0.6"/><path d="M9.5 12.5 L16 9.2 L16 19 L9.5 22 Z" fill="#ddd" stroke="#555" stroke-width="0.6"/><path d="M11.5 12.8 L21 8.8 L21 18.4 L11.5 22.6 Z" fill="#fff" stroke="#555" stroke-width="0.6"/><path d="M14.5 19.5 L18.8 12 L18.4 17.6 Z" fill="none" stroke="#ff5050" stroke-width="0.8"/></g><g transform="translate(1463 174)"><rect x="0.5" y="0.5" width="27" height="27" fill="#fff" stroke="#4a4a4a" stroke-width="1"/><rect x="0" y="0" width="28" height="4.6" fill="#000"/><rect x="1" y="1" width="3" height="3" fill="#fff"/><rect x="7" y="10" width="10.6" height="7.4" fill="#fdf2c8" stroke="#6a6a50" stroke-width="0.7"/><circle cx="16.2" cy="17.3" r="4.2" fill="#fdf2c8" fill-opacity="0.85" stroke="#6a6a50" stroke-width="0.7"/></g><g transform="translate(1463 220)"><rect x="0.5" y="0.5" width="27" height="27" fill="#fff" stroke="#4a4a4a" stroke-width="1"/><rect x="0" y="0" width="28" height="4.6" fill="#000"/><rect x="1" y="1" width="3" height="3" fill="#fff"/><rect x="5.6" y="10.2" width="16.4" height="11" rx="2.6" fill="#f8f8f6" stroke="#b6c8e4" stroke-width="1"/></g><g transform="translate(1463 276)"><rect x="0.5" y="0.5" width="27" height="27" fill="#fff" stroke="#4a4a4a" stroke-width="1"/><rect x="0" y="0" width="28" height="4.6" fill="#000"/><rect x="1" y="1" width="3" height="3" fill="#fff"/><rect x="3.4" y="8" width="4" height="3.2" rx="0.8" fill="#000"/><rect x="10.4" y="8.1" width="14" height="3.2" fill="#fff" stroke="#444" stroke-width="0.8"/><rect x="3.4" y="13.9" width="4" height="3.2" rx="0.8" fill="#000"/><rect x="10.4" y="14" width="14" height="3.2" fill="#fff" stroke="#444" stroke-width="0.8"/><rect x="3.4" y="19.8" width="4" height="3.2" rx="0.8" fill="#000"/><rect x="10.4" y="19.9" width="14" height="3.2" fill="#fff" stroke="#444" stroke-width="0.8"/><rect x="3.4" y="25.7" width="4" height="3.2" rx="0.8" fill="#000"/><rect x="10.4" y="25.8" width="14" height="3.2" fill="#fff" stroke="#444" stroke-width="0.8"/></g><g transform="translate(1463 322)"><rect x="0.5" y="0.5" width="27" height="27" fill="#fff" stroke="#4a4a4a" stroke-width="1"/><rect x="0" y="0" width="28" height="4.6" fill="#000"/><rect x="1" y="1" width="3" height="3" fill="#fff"/><path d="M7 9.8 Q14 7.6 21 9.8 L15.4 16.6 L15.4 22.8 L12.8 21.4 L12.8 16.6 Z" fill="#c9c9c9" stroke="#666" stroke-width="0.6"/><ellipse cx="14" cy="9.9" rx="7" ry="1.6" fill="#777"/></g><g transform="translate(1463 368)"><rect x="0.5" y="0.5" width="27" height="27" fill="#fff" stroke="#4a4a4a" stroke-width="1"/><rect x="0" y="0" width="28" height="4.6" fill="#000"/><rect x="1" y="1" width="3" height="3" fill="#fff"/><path d="M6 8.6 L10.2 11.6 L10.2 19.4 L6 22.6 Z" fill="#eee" stroke="#444" stroke-width="0.7"/><rect x="10.2" y="11.6" width="4" height="7.8" fill="#fff" stroke="#555" stroke-width="0.6"/><rect x="14.2" y="11.6" width="7.4" height="7.8" rx="1.4" fill="#8a8a8a" stroke="#555" stroke-width="0.6"/><path d="M4 15.6 h20" stroke="#ff7070" stroke-width="0.8" stroke-dasharray="2.4 1"/></g><g transform="translate(1463 424)"><rect x="0.5" y="0.5" width="27" height="27" fill="#fff" stroke="#4a4a4a" stroke-width="1"/><rect x="0" y="0" width="28" height="4.6" fill="#000"/><rect x="1" y="1" width="3" height="3" fill="#fff"/><path d="M2.6 8.6 h13.6 M2.6 12 h12.6 M2.6 15.4 h16 M2.6 18.8 h16.6" stroke="#777" stroke-width="1.2" stroke-dasharray="2.2 0.6 3 0.5 1.6 0.7"/><rect x="0.5" y="22.4" width="27" height="1" fill="#4a4a4a"/><path d="M3 25.4 h2 M9.6 25.4 h15" stroke="#555" stroke-width="1.3" stroke-dasharray="1.8 0.6"/></g><g transform="translate(1463 471)"><rect x="0.5" y="0.5" width="27" height="27" fill="#fff" stroke="#4a4a4a" stroke-width="1"/><rect x="0" y="0" width="28" height="4.6" fill="#000"/><rect x="1" y="1" width="3" height="3" fill="#fff"/><rect x="7.8" y="9" width="12.4" height="13.6" rx="0.8" fill="#c17d11" stroke="#9a6410" stroke-width="0.5"/><rect x="9.2" y="10.4" width="9.6" height="11" fill="#f1f1ee"/><rect x="11" y="7.6" width="6" height="3.2" rx="0.8" fill="#8d8f85"/><path d="M10.4 13.4 h7 M10.4 15.4 h7 M10.4 17.4 h5" stroke="#d0d0d0" stroke-width="0.8"/><path d="M18.8 18.8 L16.2 21.4 L18.8 21.4 Z" fill="#aaa"/></g></svg>
<div class="a" style="left:72px;top:748px;width:1083px;height:2px;background:#b9b9b9"></div>
<div class="a" style="left:72px;top:750px;width:1081px;height:20px;background:#fff"></div>
<div class="a" style="left:72px;top:770px;width:1081px;height:1px;background:#b4b4b4"></div>
<div class="a" style="left:1153px;top:750px;width:1px;height:48px;background:#b4b4b4"></div>
<div class="a" style="left:72px;top:771px;width:1081px;height:27px;background:#ececec"></div>
<div class="a" style="left:185px;top:776px;width:942px;height:18px;background:#fff"></div>
<div class="a" style="left:72px;top:794.5px;width:1055px;height:3.5px;background:linear-gradient(#e6e6e6,#dadada)"></div>
<div class="a" style="left:1127.3px;top:772.3px;width:25px;height:25px;background:linear-gradient(#f6f6f6,#e9e9e9);border:1px solid #b0b0b0"></div>
<svg class="a" style="left:1133px;top:780px" width="14" height="10" viewBox="0 0 14 10"><rect x="0.5" y="0.5" width="13" height="9" fill="#f2f2f2" stroke="#555" stroke-width="1"/><rect x="0" y="0" width="14" height="3" fill="#111"/><rect x="10" y="1" width="1" height="1" fill="#aaa"/></svg>
<span class="t " style="left:77.3px;top:751.2px;font-size:13.6px;color:#0000d0;letter-spacing:-0.156px;font-style:italic;-webkit-text-stroke:0.2px #0000d0;">Comando:</span>
<span class="t " style="left:142.2px;top:751.2px;font-size:13.6px;color:#0000d0;letter-spacing:-0.168px;-webkit-text-stroke:0.2px #0000d0;">line</span>
<span class="t " style="left:73px;top:779px;font-size:13.6px;color:#111;letter-spacing:-0.077px;-webkit-text-stroke:0.2px #111;">Punto successivo:</span>
<div class="a" style="left:0px;top:798px;width:1500px;height:46px;background:#dcdcdc"></div>
<div class="a" style="left:0px;top:797.5px;width:1500px;height:1px;background:#d0d0d0"></div>
<span class="t " style="left:1.9px;top:807.12px;font-size:9.9px;color:#111;letter-spacing:0.302px;-webkit-text-stroke:0.1px #111;">-46.2,15.8</span>
<span class="t " style="left:1.9px;top:827.42px;font-size:9.9px;color:#111;letter-spacing:0.316px;-webkit-text-stroke:0.1px #111;">@-76.2,-4.2</span>
<span class="t " style="left:255.8px;top:807.12px;font-size:9.9px;color:#111;letter-spacing:0.051px;-webkit-text-stroke:0.1px #111;">48.827&lt;161°</span>
<span class="t " style="left:255.8px;top:827.42px;font-size:9.9px;color:#111;letter-spacing:-0.038px;-webkit-text-stroke:0.1px #111;">@76.3157&lt;183°</span>
<span class="t " style="left:618.9px;top:816.92px;font-size:9.9px;color:#111;letter-spacing:0.197px;-webkit-text-stroke:0.1px #111;">Punto successivo</span>
<span class="t " style="left:753.6px;top:816.92px;font-size:9.9px;color:#111;letter-spacing:0.188px;-webkit-text-stroke:0.1px #111;">Fatto</span>
<span class="t " style="left:948.9px;top:816.92px;font-size:9.9px;color:#111;letter-spacing:0.157px;-webkit-text-stroke:0.1px #111;">Nessun entità selezionate.</span>
<div class="a" style="left:253px;top:802px;width:1px;height:40px;background:#8c8c8c"></div>
<div class="a" style="left:254px;top:802px;width:1px;height:40px;background:#f4f4f4"></div>
<div class="a" style="left:506.3px;top:818.7px;width:6px;height:6px;background:#c6c6c6;border-radius:3px"></div>
<div class="a" style="left:940px;top:818.7px;width:6px;height:6px;background:#c6c6c6;border-radius:3px"></div>
<div class="a" style="left:1269.3px;top:818.7px;width:6px;height:6px;background:#c6c6c6;border-radius:3px"></div>
<svg class="a" style="left:716px;top:805px" width="20" height="32" viewBox="0 0 20 32"><path d="M1 10 Q1 1 9.7 1 Q18.4 1 18.4 10 L18.4 22 Q18.4 30.6 9.7 30.6 Q1 30.6 1 22 Z" fill="#fff" stroke="#333" stroke-width="0.9"/><path d="M1 13.6 Q9.7 12 18.4 13.6" fill="none" stroke="#333" stroke-width="0.9"/><path d="M9.7 1.5 V3 M9.7 10 V13" stroke="#333" stroke-width="0.9"/><rect x="8.3" y="3" width="2.8" height="7" rx="1.4" fill="#fff" stroke="#333" stroke-width="0.9"/></svg>
</body></html>
